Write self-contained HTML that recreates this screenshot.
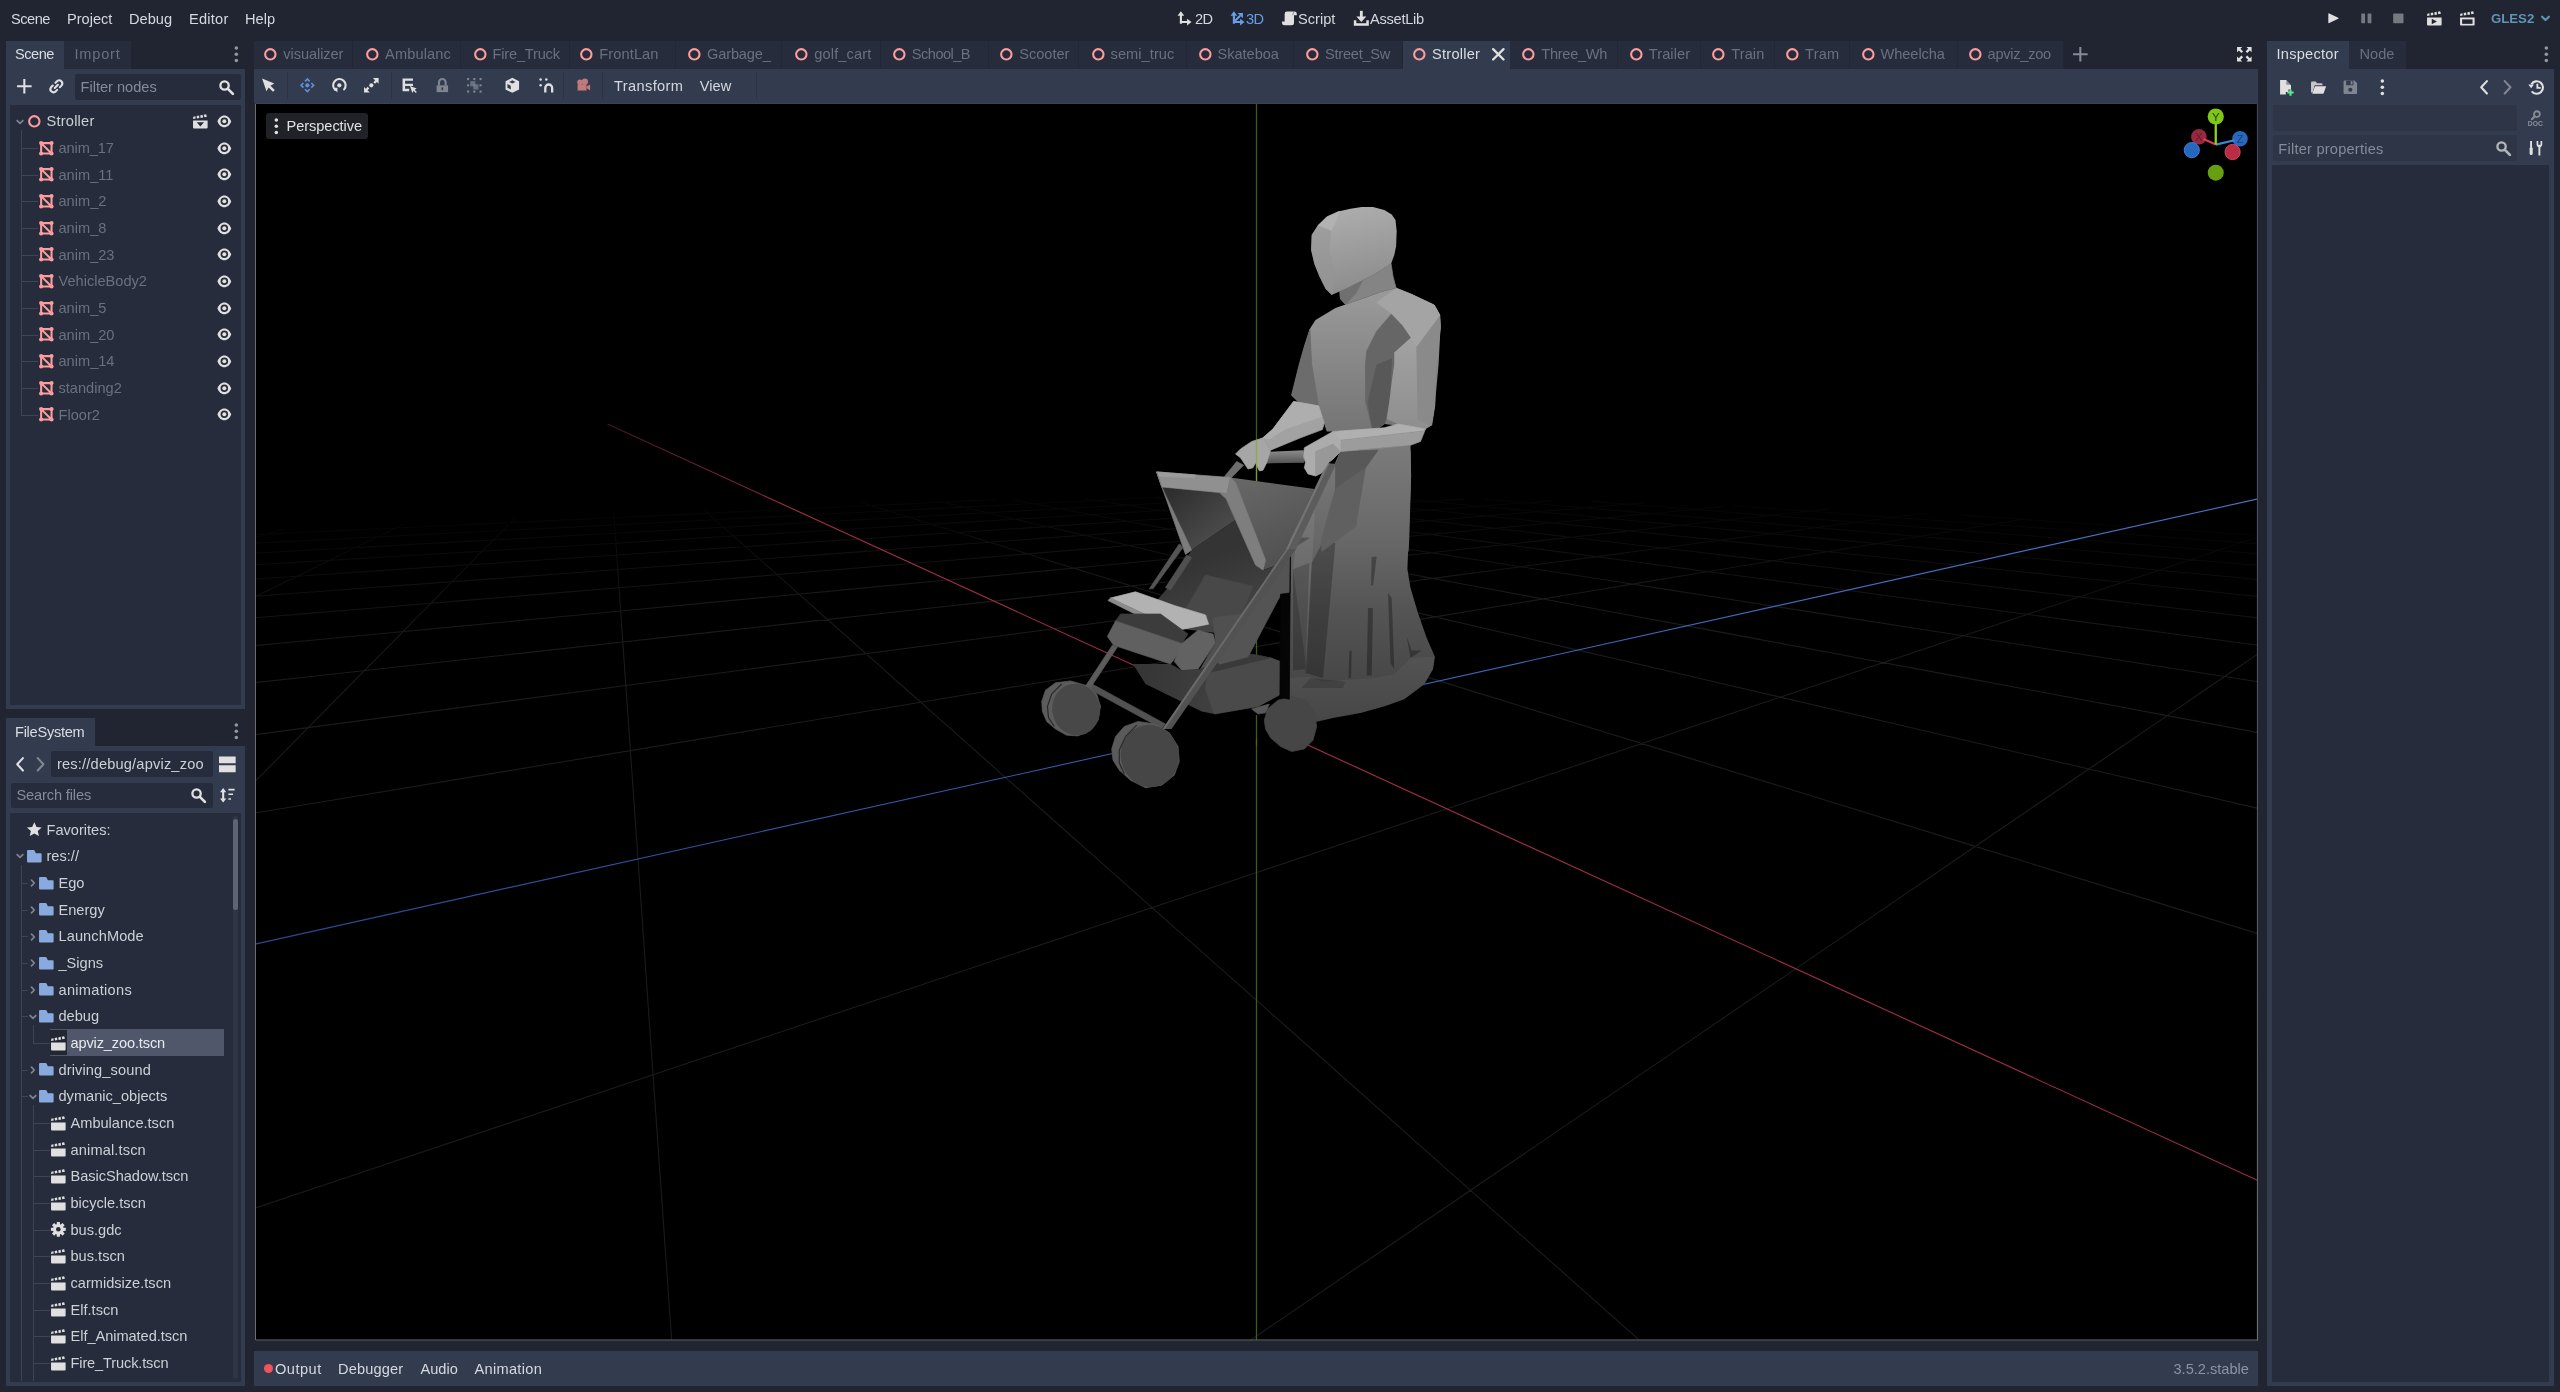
<!DOCTYPE html>
<html><head><meta charset="utf-8"><title>Godot Engine - Stroller</title>
<style>
html,body{margin:0;padding:0;background:#202531;}
body{width:2560px;height:1392px;position:relative;overflow:hidden;font-family:"Liberation Sans",sans-serif;}
body>div,body>span,body>svg{position:absolute;}
.t{white-space:nowrap;line-height:20px;height:20px;}
.i{overflow:visible;}
#w{position:absolute;left:0;top:0;width:2560px;height:1392px;will-change:transform;}
#w>div,#w>span,#w>svg{position:absolute;}
</style></head><body><div id="w">
<span class="t" style="left:11px;top:8.50px;color:#d5d8dd;font-size:14.6px;letter-spacing:-0.48px;">Scene</span>
<span class="t" style="left:67px;top:8.50px;color:#d5d8dd;font-size:14.6px;">Project</span>
<span class="t" style="left:129px;top:8.50px;color:#d5d8dd;font-size:14.6px;">Debug</span>
<span class="t" style="left:189px;top:8.50px;color:#d5d8dd;font-size:14.6px;letter-spacing:0.23px;">Editor</span>
<span class="t" style="left:245px;top:8.50px;color:#d5d8dd;font-size:14.6px;">Help</span>
<svg class="i" style="left:1176.16px;top:10.16px;width:16.67px;height:16.67px;" viewBox="0 0 16 16"><g transform="translate(1.3 1.2) scale(0.85)"><path d="M4 14V3M3 12.200H12.500" stroke="#e0e0e0" stroke-width="2.400" fill="none"/><path d="M4 0L7.800 5H.2zM16 12.200L11 8.400v7.600z" fill="#e0e0e0"/></g></svg>
<span class="t" style="left:1195px;top:8.50px;color:#d5d8dd;font-size:14.6px;letter-spacing:-0.68px;">2D</span>
<svg class="i" style="left:1229.16px;top:10.16px;width:16.67px;height:16.67px;" viewBox="0 0 16 16"><g transform="translate(1.3 1.2) scale(0.85)"><path d="M4 14V3M3 12.200H12.500M4.800 11.400L11 5.200" stroke="#699ce8" stroke-width="2.400" fill="none"/><path d="M4 0L7.800 5H.2zM16 12.200L11 8.400v7.600zM14.200 2v6L8.200 2z" fill="#699ce8"/></g></svg>
<span class="t" style="left:1246px;top:8.50px;color:#699ce8;font-size:14.6px;letter-spacing:-0.73px;">3D</span>
<svg class="i" style="left:1281.16px;top:10.16px;width:16.67px;height:16.67px;" viewBox="0 0 16 16"><path d="M5.800 1.500A2.300 2.300 0 0 0 3.500 3.800V11H1v1.300A2.400 2.400 0 0 0 3.400 14.700h6.700a2.400 2.400 0 0 0 2.400-2.400V5h2.700V3.800A2.300 2.300 0 0 0 12.900 1.500z" fill="#e0e0e0"/><path d="M12.800 2.200a1.400 1.400 0 0 0-1.300 1.500V5" fill="none" stroke="#202531" stroke-width=".7" opacity=".6"/></svg>
<span class="t" style="left:1298px;top:8.50px;color:#d5d8dd;font-size:14.6px;">Script</span>
<svg class="i" style="left:1352.66px;top:10.16px;width:16.67px;height:16.67px;" viewBox="0 0 16 16"><path d="M8 .8V8" stroke="#e0e0e0" stroke-width="2.700" fill="none"/><path d="M3.200 6.200h9.600L8 11.600z" fill="#e0e0e0"/><path d="M2 9.800V14H14V9.800" stroke="#e0e0e0" stroke-width="2.400" fill="none"/></svg>
<span class="t" style="left:1370px;top:8.50px;color:#d5d8dd;font-size:14.6px;letter-spacing:-0.26px;">AssetLib</span>
<svg class="i" style="left:2324.66px;top:10.16px;width:16.67px;height:16.67px;" viewBox="0 0 16 16"><path d="M3.200 3.900v8.200a.6.6 0 0 0 .9.500l8.600-4.100a.6.6 0 0 0 0-1l-8.600-4.100a.6.6 0 0 0-.9.500z" fill="#e0e0e0"/></svg>
<svg class="i" style="left:2357.66px;top:10.16px;width:16.67px;height:16.67px;opacity:0.45;" viewBox="0 0 16 16"><rect x="3.100" y="3.300" width="3.700" height="9.400" rx=".6" fill="#e0e0e0"/><rect x="9.200" y="3.300" width="3.700" height="9.400" rx=".6" fill="#e0e0e0"/></svg>
<svg class="i" style="left:2389.66px;top:10.16px;width:16.67px;height:16.67px;opacity:0.45;" viewBox="0 0 16 16"><rect x="3.050" y="3.300" width="9.900" height="9.400" rx=".8" fill="#e0e0e0"/></svg>
<svg class="i" style="left:2426.16px;top:10.16px;width:16.67px;height:16.67px;" viewBox="0 0 16 16"><path d="M1 7.200h14v6.800a1 1 0 0 1-1 1H2a1 1 0 0 1-1-1z" fill="#e0e0e0"/><path d="M1 5.800l.3-2.200 2-.4 .2 2.200zM4.700 5.300l-.2-2.300 2.200-.5 .4 2.400zM8.300 4.700l-.4-2.400 2.200-.500 .6 2.500zM11.900 4.100l-.600-2.500 2.300-.5 .700 2.600z" fill="#e0e0e0"/><path d="M5.500 8.400v5.400l5-2.700z" fill="#202531"/></svg>
<svg class="i" style="left:2458.66px;top:10.16px;width:16.67px;height:16.67px;" viewBox="0 0 16 16"><path d="M1 7.200h14v6.800a1 1 0 0 1-1 1H2a1 1 0 0 1-1-1z" fill="#e0e0e0"/><path d="M1 5.800l.3-2.200 2-.4 .2 2.200zM4.700 5.300l-.2-2.300 2.200-.5 .4 2.400zM8.300 4.700l-.4-2.400 2.200-.500 .6 2.500zM11.900 4.100l-.600-2.500 2.300-.5 .700 2.600z" fill="#e0e0e0"/><path d="M3 9h10v4.300H3z" fill="#202531"/></svg>
<span class="t" style="left:2491px;top:8.50px;color:#5e94b4;font-size:14.6px;font-weight:bold;font-size:13.2px;">GLES2</span>
<svg class="i" style="left:2536.50px;top:10.30px;width:17px;height:17px;" viewBox="0 0 16 16"><path d="M4.800 6.300l3.200 3.200 3.200-3.200" fill="none" stroke="#5e94b4" stroke-width="2" stroke-linecap="round" stroke-linejoin="round"/></svg>
<div style="left:6px;top:69px;width:238.5px;height:639.5px;background:#333b4f;"></div>
<div style="left:6px;top:41px;width:58px;height:28.5px;background:#333b4f;"></div>
<div style="left:64px;top:41px;width:67px;height:28px;background:#262c3b;"></div>
<span class="t" style="left:15px;top:44.00px;color:#dadde2;font-size:14.6px;letter-spacing:-0.48px;">Scene</span>
<span class="t" style="left:74.5px;top:44.00px;color:#6a7083;font-size:14.6px;letter-spacing:0.77px;">Import</span>
<svg class="i" style="left:228.16px;top:46.16px;width:16.67px;height:16.67px;" viewBox="0 0 16 16"><g fill="#9097a6"><circle cx="8" cy="2" r="1.7"/><circle cx="8" cy="8" r="1.7"/><circle cx="8" cy="14" r="1.7"/></g></svg>
<svg class="i" style="left:16.16px;top:78.16px;width:16.67px;height:16.67px;" viewBox="0 0 16 16"><path d="M7 1v6H1v2h6v6h2V9h6V7H9V1z" fill="#e0e0e0"/></svg>
<svg class="i" style="left:48.16px;top:78.16px;width:16.67px;height:16.67px;" viewBox="0 0 16 16"><g fill="none" stroke="#e0e0e0" stroke-width="2" stroke-linecap="round"><path d="M6.5 9.500l3-3"/><path d="M7.200 4.600l1.700-1.700a3 3 0 0 1 4.200 4.200l-1.700 1.700"/><path d="M8.800 11.400l-1.700 1.700a3 3 0 0 1-4.200-4.200l1.700-1.700"/></g></svg>
<div style="left:75px;top:73.5px;width:166px;height:26px;background:#262c3b;border-radius:2px;"></div>
<span class="t" style="left:80.5px;top:77.00px;color:#858b99;font-size:14.6px;">Filter nodes</span>
<svg class="i" style="left:217.66px;top:78.66px;width:16.67px;height:16.67px;" viewBox="0 0 16 16"><circle cx="6.300" cy="6.300" r="4" fill="none" stroke="#e0e0e0" stroke-width="2.200"/><path d="M9.500 9.500l4.800 4.800" stroke="#e0e0e0" stroke-width="2.600" stroke-linecap="round"/></svg>
<div style="left:10px;top:104.5px;width:231px;height:600px;background:#262c3b;"></div>
<svg class="i" style="left:13.40px;top:114.70px;width:14px;height:14px;" viewBox="0 0 16 16"><path d="M4.800 6.300l3.200 3.200 3.200-3.200" fill="none" stroke="#7d8393" stroke-width="2" stroke-linecap="round" stroke-linejoin="round"/></svg>
<svg class="i" style="left:26.16px;top:112.87px;width:16.67px;height:16.67px;" viewBox="0 0 16 16"><circle cx="8" cy="8" r="5" fill="none" stroke="#fc9c9c" stroke-width="2"/></svg>
<span class="t" style="left:46.5px;top:111.20px;color:#cdd0d6;font-size:14.6px;letter-spacing:0.22px;">Stroller</span>
<svg class="i" style="left:192.16px;top:112.87px;width:16.67px;height:16.67px;" viewBox="0 0 16 16"><path d="M1 7.200h14v6.800a1 1 0 0 1-1 1H2a1 1 0 0 1-1-1z" fill="#e0e0e0"/><path d="M1 5.800l.3-2.200 2-.4 .2 2.200zM4.700 5.300l-.2-2.300 2.200-.5 .4 2.400zM8.300 4.700l-.4-2.400 2.200-.500 .6 2.500zM11.900 4.100l-.600-2.500 2.300-.5 .700 2.600z" fill="#e0e0e0"/><path d="M4.500 9h7L8 13z" fill="#262c3b"/></svg>
<svg class="i" style="left:216.36px;top:112.87px;width:16.67px;height:16.67px;" viewBox="0 0 16 16"><path d="M8 2.300C4.900 2.300 2.600 4.700 1.500 7.600a1 1 0 0 0 0 .8C2.600 11.300 4.900 13.700 8 13.700s5.400-2.400 6.500-5.300a1 1 0 0 0 0-.8C13.400 4.700 11.100 2.300 8 2.300z" fill="#e0e0e0"/><circle cx="8" cy="8" r="3.6" fill="#262c3b"/><circle cx="8" cy="8" r="1.9" fill="#e0e0e0"/></svg>
<div style="left:21px;top:130.2px;width:1px;height:284.98px;background:#3d4458;"></div>
<div style="left:21px;top:147.88px;width:17px;height:1px;background:#3d4458;"></div>
<svg class="i" style="left:38.37px;top:139.54px;width:16.67px;height:16.67px;" viewBox="0 0 16 16"><path d="M3 3h10v10H3zM3 3l10 10" fill="none" stroke="#fc9c9c" stroke-width="2"/><g fill="#fc9c9c"><circle cx="3" cy="3" r="2"/><circle cx="13" cy="3" r="2"/><circle cx="3" cy="13" r="2"/><circle cx="13" cy="13" r="2"/></g></svg>
<span class="t" style="left:58.5px;top:137.88px;color:#6a7083;font-size:14.6px;letter-spacing:-0.1px;">anim_17</span>
<svg class="i" style="left:216.36px;top:139.54px;width:16.67px;height:16.67px;" viewBox="0 0 16 16"><path d="M8 2.300C4.900 2.300 2.600 4.700 1.500 7.600a1 1 0 0 0 0 .8C2.600 11.300 4.900 13.700 8 13.700s5.400-2.400 6.500-5.300a1 1 0 0 0 0-.8C13.400 4.700 11.100 2.300 8 2.300z" fill="#e0e0e0"/><circle cx="8" cy="8" r="3.6" fill="#262c3b"/><circle cx="8" cy="8" r="1.9" fill="#e0e0e0"/></svg>
<div style="left:21px;top:174.56px;width:17px;height:1px;background:#3d4458;"></div>
<svg class="i" style="left:38.37px;top:166.22px;width:16.67px;height:16.67px;" viewBox="0 0 16 16"><path d="M3 3h10v10H3zM3 3l10 10" fill="none" stroke="#fc9c9c" stroke-width="2"/><g fill="#fc9c9c"><circle cx="3" cy="3" r="2"/><circle cx="13" cy="3" r="2"/><circle cx="3" cy="13" r="2"/><circle cx="13" cy="13" r="2"/></g></svg>
<span class="t" style="left:58.5px;top:164.56px;color:#6a7083;font-size:14.6px;">anim_11</span>
<svg class="i" style="left:216.36px;top:166.22px;width:16.67px;height:16.67px;" viewBox="0 0 16 16"><path d="M8 2.300C4.900 2.300 2.600 4.700 1.500 7.600a1 1 0 0 0 0 .8C2.600 11.300 4.900 13.700 8 13.700s5.400-2.400 6.500-5.300a1 1 0 0 0 0-.8C13.400 4.700 11.100 2.300 8 2.300z" fill="#e0e0e0"/><circle cx="8" cy="8" r="3.6" fill="#262c3b"/><circle cx="8" cy="8" r="1.9" fill="#e0e0e0"/></svg>
<div style="left:21px;top:201.24px;width:17px;height:1px;background:#3d4458;"></div>
<svg class="i" style="left:38.37px;top:192.91px;width:16.67px;height:16.67px;" viewBox="0 0 16 16"><path d="M3 3h10v10H3zM3 3l10 10" fill="none" stroke="#fc9c9c" stroke-width="2"/><g fill="#fc9c9c"><circle cx="3" cy="3" r="2"/><circle cx="13" cy="3" r="2"/><circle cx="3" cy="13" r="2"/><circle cx="13" cy="13" r="2"/></g></svg>
<span class="t" style="left:58.5px;top:191.24px;color:#6a7083;font-size:14.6px;">anim_2</span>
<svg class="i" style="left:216.36px;top:192.91px;width:16.67px;height:16.67px;" viewBox="0 0 16 16"><path d="M8 2.300C4.900 2.300 2.600 4.700 1.500 7.600a1 1 0 0 0 0 .8C2.600 11.300 4.900 13.700 8 13.700s5.400-2.400 6.500-5.300a1 1 0 0 0 0-.8C13.400 4.700 11.100 2.300 8 2.300z" fill="#e0e0e0"/><circle cx="8" cy="8" r="3.6" fill="#262c3b"/><circle cx="8" cy="8" r="1.9" fill="#e0e0e0"/></svg>
<div style="left:21px;top:227.92000000000002px;width:17px;height:1px;background:#3d4458;"></div>
<svg class="i" style="left:38.37px;top:219.59px;width:16.67px;height:16.67px;" viewBox="0 0 16 16"><path d="M3 3h10v10H3zM3 3l10 10" fill="none" stroke="#fc9c9c" stroke-width="2"/><g fill="#fc9c9c"><circle cx="3" cy="3" r="2"/><circle cx="13" cy="3" r="2"/><circle cx="3" cy="13" r="2"/><circle cx="13" cy="13" r="2"/></g></svg>
<span class="t" style="left:58.5px;top:217.92px;color:#6a7083;font-size:14.6px;">anim_8</span>
<svg class="i" style="left:216.36px;top:219.59px;width:16.67px;height:16.67px;" viewBox="0 0 16 16"><path d="M8 2.300C4.900 2.300 2.600 4.700 1.500 7.600a1 1 0 0 0 0 .8C2.600 11.300 4.900 13.700 8 13.700s5.400-2.400 6.500-5.300a1 1 0 0 0 0-.8C13.400 4.700 11.100 2.300 8 2.300z" fill="#e0e0e0"/><circle cx="8" cy="8" r="3.6" fill="#262c3b"/><circle cx="8" cy="8" r="1.9" fill="#e0e0e0"/></svg>
<div style="left:21px;top:254.60000000000002px;width:17px;height:1px;background:#3d4458;"></div>
<svg class="i" style="left:38.37px;top:246.27px;width:16.67px;height:16.67px;" viewBox="0 0 16 16"><path d="M3 3h10v10H3zM3 3l10 10" fill="none" stroke="#fc9c9c" stroke-width="2"/><g fill="#fc9c9c"><circle cx="3" cy="3" r="2"/><circle cx="13" cy="3" r="2"/><circle cx="3" cy="13" r="2"/><circle cx="13" cy="13" r="2"/></g></svg>
<span class="t" style="left:58.5px;top:244.60px;color:#6a7083;font-size:14.6px;">anim_23</span>
<svg class="i" style="left:216.36px;top:246.27px;width:16.67px;height:16.67px;" viewBox="0 0 16 16"><path d="M8 2.300C4.900 2.300 2.600 4.700 1.500 7.600a1 1 0 0 0 0 .8C2.600 11.300 4.900 13.700 8 13.700s5.400-2.400 6.500-5.300a1 1 0 0 0 0-.8C13.400 4.700 11.100 2.300 8 2.300z" fill="#e0e0e0"/><circle cx="8" cy="8" r="3.6" fill="#262c3b"/><circle cx="8" cy="8" r="1.9" fill="#e0e0e0"/></svg>
<div style="left:21px;top:281.28px;width:17px;height:1px;background:#3d4458;"></div>
<svg class="i" style="left:38.37px;top:272.94px;width:16.67px;height:16.67px;" viewBox="0 0 16 16"><path d="M3 3h10v10H3zM3 3l10 10" fill="none" stroke="#fc9c9c" stroke-width="2"/><g fill="#fc9c9c"><circle cx="3" cy="3" r="2"/><circle cx="13" cy="3" r="2"/><circle cx="3" cy="13" r="2"/><circle cx="13" cy="13" r="2"/></g></svg>
<span class="t" style="left:58.5px;top:271.28px;color:#6a7083;font-size:14.6px;">VehicleBody2</span>
<svg class="i" style="left:216.36px;top:272.94px;width:16.67px;height:16.67px;" viewBox="0 0 16 16"><path d="M8 2.300C4.900 2.300 2.600 4.700 1.500 7.600a1 1 0 0 0 0 .8C2.600 11.300 4.900 13.700 8 13.700s5.400-2.400 6.500-5.300a1 1 0 0 0 0-.8C13.400 4.700 11.100 2.300 8 2.300z" fill="#e0e0e0"/><circle cx="8" cy="8" r="3.6" fill="#262c3b"/><circle cx="8" cy="8" r="1.9" fill="#e0e0e0"/></svg>
<div style="left:21px;top:307.96px;width:17px;height:1px;background:#3d4458;"></div>
<svg class="i" style="left:38.37px;top:299.62px;width:16.67px;height:16.67px;" viewBox="0 0 16 16"><path d="M3 3h10v10H3zM3 3l10 10" fill="none" stroke="#fc9c9c" stroke-width="2"/><g fill="#fc9c9c"><circle cx="3" cy="3" r="2"/><circle cx="13" cy="3" r="2"/><circle cx="3" cy="13" r="2"/><circle cx="13" cy="13" r="2"/></g></svg>
<span class="t" style="left:58.5px;top:297.96px;color:#6a7083;font-size:14.6px;">anim_5</span>
<svg class="i" style="left:216.36px;top:299.62px;width:16.67px;height:16.67px;" viewBox="0 0 16 16"><path d="M8 2.300C4.900 2.300 2.600 4.700 1.500 7.600a1 1 0 0 0 0 .8C2.600 11.300 4.900 13.700 8 13.700s5.400-2.400 6.500-5.300a1 1 0 0 0 0-.8C13.400 4.700 11.100 2.300 8 2.300z" fill="#e0e0e0"/><circle cx="8" cy="8" r="3.6" fill="#262c3b"/><circle cx="8" cy="8" r="1.9" fill="#e0e0e0"/></svg>
<div style="left:21px;top:334.64px;width:17px;height:1px;background:#3d4458;"></div>
<svg class="i" style="left:38.37px;top:326.31px;width:16.67px;height:16.67px;" viewBox="0 0 16 16"><path d="M3 3h10v10H3zM3 3l10 10" fill="none" stroke="#fc9c9c" stroke-width="2"/><g fill="#fc9c9c"><circle cx="3" cy="3" r="2"/><circle cx="13" cy="3" r="2"/><circle cx="3" cy="13" r="2"/><circle cx="13" cy="13" r="2"/></g></svg>
<span class="t" style="left:58.5px;top:324.64px;color:#6a7083;font-size:14.6px;">anim_20</span>
<svg class="i" style="left:216.36px;top:326.31px;width:16.67px;height:16.67px;" viewBox="0 0 16 16"><path d="M8 2.300C4.900 2.300 2.600 4.700 1.500 7.600a1 1 0 0 0 0 .8C2.600 11.300 4.900 13.700 8 13.700s5.400-2.400 6.500-5.300a1 1 0 0 0 0-.8C13.400 4.700 11.100 2.300 8 2.300z" fill="#e0e0e0"/><circle cx="8" cy="8" r="3.6" fill="#262c3b"/><circle cx="8" cy="8" r="1.9" fill="#e0e0e0"/></svg>
<div style="left:21px;top:361.32px;width:17px;height:1px;background:#3d4458;"></div>
<svg class="i" style="left:38.37px;top:352.99px;width:16.67px;height:16.67px;" viewBox="0 0 16 16"><path d="M3 3h10v10H3zM3 3l10 10" fill="none" stroke="#fc9c9c" stroke-width="2"/><g fill="#fc9c9c"><circle cx="3" cy="3" r="2"/><circle cx="13" cy="3" r="2"/><circle cx="3" cy="13" r="2"/><circle cx="13" cy="13" r="2"/></g></svg>
<span class="t" style="left:58.5px;top:351.32px;color:#6a7083;font-size:14.6px;">anim_14</span>
<svg class="i" style="left:216.36px;top:352.99px;width:16.67px;height:16.67px;" viewBox="0 0 16 16"><path d="M8 2.300C4.900 2.300 2.600 4.700 1.500 7.600a1 1 0 0 0 0 .8C2.600 11.300 4.900 13.700 8 13.700s5.400-2.400 6.500-5.300a1 1 0 0 0 0-.8C13.400 4.700 11.100 2.300 8 2.300z" fill="#e0e0e0"/><circle cx="8" cy="8" r="3.6" fill="#262c3b"/><circle cx="8" cy="8" r="1.9" fill="#e0e0e0"/></svg>
<div style="left:21px;top:388.0px;width:17px;height:1px;background:#3d4458;"></div>
<svg class="i" style="left:38.37px;top:379.67px;width:16.67px;height:16.67px;" viewBox="0 0 16 16"><path d="M3 3h10v10H3zM3 3l10 10" fill="none" stroke="#fc9c9c" stroke-width="2"/><g fill="#fc9c9c"><circle cx="3" cy="3" r="2"/><circle cx="13" cy="3" r="2"/><circle cx="3" cy="13" r="2"/><circle cx="13" cy="13" r="2"/></g></svg>
<span class="t" style="left:58.5px;top:378.00px;color:#6a7083;font-size:14.6px;">standing2</span>
<svg class="i" style="left:216.36px;top:379.67px;width:16.67px;height:16.67px;" viewBox="0 0 16 16"><path d="M8 2.300C4.900 2.300 2.600 4.700 1.500 7.600a1 1 0 0 0 0 .8C2.600 11.300 4.900 13.700 8 13.700s5.400-2.400 6.500-5.300a1 1 0 0 0 0-.8C13.400 4.700 11.100 2.300 8 2.300z" fill="#e0e0e0"/><circle cx="8" cy="8" r="3.6" fill="#262c3b"/><circle cx="8" cy="8" r="1.9" fill="#e0e0e0"/></svg>
<div style="left:21px;top:414.68px;width:17px;height:1px;background:#3d4458;"></div>
<svg class="i" style="left:38.37px;top:406.35px;width:16.67px;height:16.67px;" viewBox="0 0 16 16"><path d="M3 3h10v10H3zM3 3l10 10" fill="none" stroke="#fc9c9c" stroke-width="2"/><g fill="#fc9c9c"><circle cx="3" cy="3" r="2"/><circle cx="13" cy="3" r="2"/><circle cx="3" cy="13" r="2"/><circle cx="13" cy="13" r="2"/></g></svg>
<span class="t" style="left:58.5px;top:404.68px;color:#6a7083;font-size:14.6px;">Floor2</span>
<svg class="i" style="left:216.36px;top:406.35px;width:16.67px;height:16.67px;" viewBox="0 0 16 16"><path d="M8 2.300C4.900 2.300 2.600 4.700 1.500 7.600a1 1 0 0 0 0 .8C2.600 11.300 4.900 13.700 8 13.700s5.400-2.400 6.500-5.300a1 1 0 0 0 0-.8C13.400 4.700 11.100 2.300 8 2.300z" fill="#e0e0e0"/><circle cx="8" cy="8" r="3.6" fill="#262c3b"/><circle cx="8" cy="8" r="1.9" fill="#e0e0e0"/></svg>
<div style="left:6px;top:745.5px;width:238.5px;height:640.5px;background:#333b4f;"></div>
<div style="left:6px;top:718px;width:89px;height:28px;background:#333b4f;"></div>
<span class="t" style="left:15px;top:721.50px;color:#dadde2;font-size:14.6px;letter-spacing:-0.27px;">FileSystem</span>
<svg class="i" style="left:228.16px;top:723.16px;width:16.67px;height:16.67px;" viewBox="0 0 16 16"><g fill="#9097a6"><circle cx="8" cy="2" r="1.7"/><circle cx="8" cy="8" r="1.7"/><circle cx="8" cy="14" r="1.7"/></g></svg>
<svg class="i" style="left:12.16px;top:755.66px;width:16.67px;height:16.67px;" viewBox="0 0 16 16"><path d="M10.500 2L5 8l5.500 6" fill="none" stroke="#e0e0e0" stroke-width="2" stroke-linecap="round" stroke-linejoin="round"/></svg>
<svg class="i" style="left:32.16px;top:755.66px;width:16.67px;height:16.67px;opacity:0.45;" viewBox="0 0 16 16"><path d="M5.500 2L11 8l-5.500 6" fill="none" stroke="#e0e0e0" stroke-width="2" stroke-linecap="round" stroke-linejoin="round"/></svg>
<div style="left:50.5px;top:751px;width:162px;height:25.5px;background:#262c3b;border-radius:2px;"></div>
<span class="t" style="left:57px;top:754.00px;color:#cdd0d6;font-size:14.6px;letter-spacing:0.19px;">res://debug/apviz_zoo</span>
<svg class="i" style="left:218.66px;top:755.66px;width:16.67px;height:16.67px;" viewBox="0 0 16 16"><path d="M0 .5h16v6.500H0zM0 9h16v6.500H0z" fill="#e0e0e0"/></svg>
<div style="left:10.5px;top:782.5px;width:202px;height:25.5px;background:#262c3b;border-radius:2px;"></div>
<span class="t" style="left:16.5px;top:785.00px;color:#858b99;font-size:14.6px;letter-spacing:-0.14px;">Search files</span>
<svg class="i" style="left:189.66px;top:786.66px;width:16.67px;height:16.67px;" viewBox="0 0 16 16"><circle cx="6.300" cy="6.300" r="4" fill="none" stroke="#e0e0e0" stroke-width="2.200"/><path d="M9.500 9.500l4.800 4.800" stroke="#e0e0e0" stroke-width="2.600" stroke-linecap="round"/></svg>
<svg class="i" style="left:218.66px;top:786.66px;width:16.67px;height:16.67px;" viewBox="0 0 16 16"><path d="M4 1L1 5h2v6H1l3 4 3-4H5V5h2z" fill="#e0e0e0"/><path d="M9 2.500h6M9 7h4.500M9 11.500h2.500" stroke="#e0e0e0" stroke-width="1.600"/></svg>
<div style="left:10px;top:813px;width:231px;height:568.5px;background:#262c3b;"></div>
<div style="left:232.5px;top:816px;width:5px;height:563px;background:#2f3547;border-radius:2.5px;"></div>
<div style="left:232.5px;top:819px;width:5px;height:91px;background:#5d6475;border-radius:2.5px;"></div>
<svg class="i" style="left:26.16px;top:821.16px;width:16.67px;height:16.67px;" viewBox="0 0 16 16"><path d="M8 1.200l2.100 4.600 5 .5-3.800 3.300 1.100 4.900L8 12l-4.400 2.500 1.100-4.900L.9 6.300l5-.5z" fill="#e0e0e0"/></svg>
<span class="t" style="left:46.5px;top:819.50px;color:#cdd0d6;font-size:14.6px;">Favorites:</span>
<svg class="i" style="left:13.40px;top:849.48px;width:14px;height:14px;" viewBox="0 0 16 16"><path d="M4.800 6.300l3.200 3.200 3.200-3.200" fill="none" stroke="#7d8393" stroke-width="2" stroke-linecap="round" stroke-linejoin="round"/></svg>
<svg class="i" style="left:26.16px;top:847.84px;width:16.67px;height:16.67px;" viewBox="0 0 16 16"><path d="M2 2a1 1 0 0 0-1 1v10a1 1 0 0 0 1 1h12a1 1 0 0 0 1-1V6a1 1 0 0 0-1-1H9.500L8.300 2.600A1 1 0 0 0 7.400 2z" fill="#88aadf"/></svg>
<span class="t" style="left:46.5px;top:846.18px;color:#cdd0d6;font-size:14.6px;">res://</span>
<div style="left:21px;top:865.18px;width:1px;height:516.32px;background:#3d4458;"></div>
<div style="left:21px;top:882.86px;width:7px;height:1px;background:#3d4458;"></div>
<svg class="i" style="left:25.50px;top:876.16px;width:14px;height:14px;" viewBox="0 0 16 16"><path d="M6.300 4.800l3.200 3.200-3.200 3.200" fill="none" stroke="#7d8393" stroke-width="2" stroke-linecap="round" stroke-linejoin="round"/></svg>
<svg class="i" style="left:38.37px;top:874.52px;width:16.67px;height:16.67px;" viewBox="0 0 16 16"><path d="M2 2a1 1 0 0 0-1 1v10a1 1 0 0 0 1 1h12a1 1 0 0 0 1-1V6a1 1 0 0 0-1-1H9.500L8.300 2.600A1 1 0 0 0 7.400 2z" fill="#88aadf"/></svg>
<span class="t" style="left:58.5px;top:872.86px;color:#cdd0d6;font-size:14.6px;">Ego</span>
<div style="left:21px;top:909.54px;width:7px;height:1px;background:#3d4458;"></div>
<svg class="i" style="left:25.50px;top:902.84px;width:14px;height:14px;" viewBox="0 0 16 16"><path d="M6.300 4.800l3.200 3.200-3.200 3.200" fill="none" stroke="#7d8393" stroke-width="2" stroke-linecap="round" stroke-linejoin="round"/></svg>
<svg class="i" style="left:38.37px;top:901.20px;width:16.67px;height:16.67px;" viewBox="0 0 16 16"><path d="M2 2a1 1 0 0 0-1 1v10a1 1 0 0 0 1 1h12a1 1 0 0 0 1-1V6a1 1 0 0 0-1-1H9.500L8.300 2.600A1 1 0 0 0 7.400 2z" fill="#88aadf"/></svg>
<span class="t" style="left:58.5px;top:899.54px;color:#cdd0d6;font-size:14.6px;">Energy</span>
<div style="left:21px;top:936.22px;width:7px;height:1px;background:#3d4458;"></div>
<svg class="i" style="left:25.50px;top:929.52px;width:14px;height:14px;" viewBox="0 0 16 16"><path d="M6.300 4.800l3.200 3.200-3.200 3.200" fill="none" stroke="#7d8393" stroke-width="2" stroke-linecap="round" stroke-linejoin="round"/></svg>
<svg class="i" style="left:38.37px;top:927.88px;width:16.67px;height:16.67px;" viewBox="0 0 16 16"><path d="M2 2a1 1 0 0 0-1 1v10a1 1 0 0 0 1 1h12a1 1 0 0 0 1-1V6a1 1 0 0 0-1-1H9.500L8.300 2.600A1 1 0 0 0 7.400 2z" fill="#88aadf"/></svg>
<span class="t" style="left:58.5px;top:926.22px;color:#cdd0d6;font-size:14.6px;letter-spacing:0.09px;">LaunchMode</span>
<div style="left:21px;top:962.9px;width:7px;height:1px;background:#3d4458;"></div>
<svg class="i" style="left:25.50px;top:956.20px;width:14px;height:14px;" viewBox="0 0 16 16"><path d="M6.300 4.800l3.200 3.200-3.200 3.200" fill="none" stroke="#7d8393" stroke-width="2" stroke-linecap="round" stroke-linejoin="round"/></svg>
<svg class="i" style="left:38.37px;top:954.56px;width:16.67px;height:16.67px;" viewBox="0 0 16 16"><path d="M2 2a1 1 0 0 0-1 1v10a1 1 0 0 0 1 1h12a1 1 0 0 0 1-1V6a1 1 0 0 0-1-1H9.500L8.300 2.600A1 1 0 0 0 7.400 2z" fill="#88aadf"/></svg>
<span class="t" style="left:58.5px;top:952.90px;color:#cdd0d6;font-size:14.6px;">_Signs</span>
<div style="left:21px;top:989.5799999999999px;width:7px;height:1px;background:#3d4458;"></div>
<svg class="i" style="left:25.50px;top:982.88px;width:14px;height:14px;" viewBox="0 0 16 16"><path d="M6.300 4.800l3.200 3.200-3.200 3.200" fill="none" stroke="#7d8393" stroke-width="2" stroke-linecap="round" stroke-linejoin="round"/></svg>
<svg class="i" style="left:38.37px;top:981.24px;width:16.67px;height:16.67px;" viewBox="0 0 16 16"><path d="M2 2a1 1 0 0 0-1 1v10a1 1 0 0 0 1 1h12a1 1 0 0 0 1-1V6a1 1 0 0 0-1-1H9.500L8.300 2.600A1 1 0 0 0 7.400 2z" fill="#88aadf"/></svg>
<span class="t" style="left:58.5px;top:979.58px;color:#cdd0d6;font-size:14.6px;letter-spacing:0.29px;">animations</span>
<div style="left:21px;top:1016.26px;width:7px;height:1px;background:#3d4458;"></div>
<svg class="i" style="left:25.50px;top:1009.56px;width:14px;height:14px;" viewBox="0 0 16 16"><path d="M4.800 6.300l3.200 3.200 3.200-3.200" fill="none" stroke="#7d8393" stroke-width="2" stroke-linecap="round" stroke-linejoin="round"/></svg>
<svg class="i" style="left:38.37px;top:1007.92px;width:16.67px;height:16.67px;" viewBox="0 0 16 16"><path d="M2 2a1 1 0 0 0-1 1v10a1 1 0 0 0 1 1h12a1 1 0 0 0 1-1V6a1 1 0 0 0-1-1H9.500L8.300 2.600A1 1 0 0 0 7.400 2z" fill="#88aadf"/></svg>
<span class="t" style="left:58.5px;top:1006.26px;color:#cdd0d6;font-size:14.6px;">debug</span>
<div style="left:33px;top:1025.26px;width:1px;height:17.680000000000064px;background:#3d4458;"></div>
<div style="left:33px;top:1042.94px;width:17px;height:1px;background:#3d4458;"></div>
<div style="left:50.3px;top:1029px;width:174.2px;height:27px;background:#50576a;"></div>
<div style="left:50.3px;top:1030px;width:16.5px;height:25px;background:#222733;"></div>
<svg class="i" style="left:50.37px;top:1034.61px;width:16.67px;height:16.67px;" viewBox="0 0 16 16"><path d="M1 7.200h14v6.800a1 1 0 0 1-1 1H2a1 1 0 0 1-1-1z" fill="#e0e0e0"/><path d="M1 5.800l.3-2.200 2-.4 .2 2.200zM4.700 5.300l-.2-2.300 2.200-.5 .4 2.400zM8.300 4.700l-.4-2.400 2.200-.500 .6 2.500zM11.900 4.100l-.600-2.500 2.300-.5 .700 2.600z" fill="#e0e0e0"/></svg>
<span class="t" style="left:70.5px;top:1032.94px;color:#e8eaee;font-size:14.6px;letter-spacing:-0.14px;">apviz_zoo.tscn</span>
<div style="left:21px;top:1069.62px;width:7px;height:1px;background:#3d4458;"></div>
<svg class="i" style="left:25.50px;top:1062.92px;width:14px;height:14px;" viewBox="0 0 16 16"><path d="M6.300 4.800l3.200 3.200-3.200 3.200" fill="none" stroke="#7d8393" stroke-width="2" stroke-linecap="round" stroke-linejoin="round"/></svg>
<svg class="i" style="left:38.37px;top:1061.28px;width:16.67px;height:16.67px;" viewBox="0 0 16 16"><path d="M2 2a1 1 0 0 0-1 1v10a1 1 0 0 0 1 1h12a1 1 0 0 0 1-1V6a1 1 0 0 0-1-1H9.500L8.300 2.600A1 1 0 0 0 7.400 2z" fill="#88aadf"/></svg>
<span class="t" style="left:58.5px;top:1059.62px;color:#cdd0d6;font-size:14.6px;letter-spacing:0.12px;">driving_sound</span>
<div style="left:21px;top:1096.3px;width:7px;height:1px;background:#3d4458;"></div>
<svg class="i" style="left:25.50px;top:1089.60px;width:14px;height:14px;" viewBox="0 0 16 16"><path d="M4.800 6.300l3.200 3.200 3.200-3.200" fill="none" stroke="#7d8393" stroke-width="2" stroke-linecap="round" stroke-linejoin="round"/></svg>
<svg class="i" style="left:38.37px;top:1087.96px;width:16.67px;height:16.67px;" viewBox="0 0 16 16"><path d="M2 2a1 1 0 0 0-1 1v10a1 1 0 0 0 1 1h12a1 1 0 0 0 1-1V6a1 1 0 0 0-1-1H9.500L8.300 2.600A1 1 0 0 0 7.400 2z" fill="#88aadf"/></svg>
<span class="t" style="left:58.5px;top:1086.30px;color:#cdd0d6;font-size:14.6px;">dymanic_objects</span>
<div style="left:33px;top:1105.3px;width:1px;height:276.20000000000005px;background:#3d4458;"></div>
<div style="left:33px;top:1122.98px;width:17px;height:1px;background:#3d4458;"></div>
<svg class="i" style="left:50.37px;top:1114.64px;width:16.67px;height:16.67px;" viewBox="0 0 16 16"><path d="M1 7.200h14v6.800a1 1 0 0 1-1 1H2a1 1 0 0 1-1-1z" fill="#e0e0e0"/><path d="M1 5.800l.3-2.200 2-.4 .2 2.200zM4.700 5.300l-.2-2.300 2.200-.5 .4 2.400zM8.300 4.700l-.4-2.400 2.200-.500 .6 2.500zM11.900 4.100l-.600-2.500 2.300-.5 .700 2.600z" fill="#e0e0e0"/></svg>
<span class="t" style="left:70.5px;top:1112.98px;color:#cdd0d6;font-size:14.6px;">Ambulance.tscn</span>
<div style="left:33px;top:1149.6599999999999px;width:17px;height:1px;background:#3d4458;"></div>
<svg class="i" style="left:50.37px;top:1141.32px;width:16.67px;height:16.67px;" viewBox="0 0 16 16"><path d="M1 7.200h14v6.800a1 1 0 0 1-1 1H2a1 1 0 0 1-1-1z" fill="#e0e0e0"/><path d="M1 5.800l.3-2.200 2-.4 .2 2.200zM4.700 5.300l-.2-2.300 2.200-.5 .4 2.400zM8.300 4.700l-.4-2.400 2.200-.500 .6 2.500zM11.900 4.100l-.600-2.500 2.300-.5 .700 2.600z" fill="#e0e0e0"/></svg>
<span class="t" style="left:70.5px;top:1139.66px;color:#cdd0d6;font-size:14.6px;letter-spacing:0.14px;">animal.tscn</span>
<div style="left:33px;top:1176.34px;width:17px;height:1px;background:#3d4458;"></div>
<svg class="i" style="left:50.37px;top:1168.00px;width:16.67px;height:16.67px;" viewBox="0 0 16 16"><path d="M1 7.200h14v6.800a1 1 0 0 1-1 1H2a1 1 0 0 1-1-1z" fill="#e0e0e0"/><path d="M1 5.800l.3-2.200 2-.4 .2 2.200zM4.700 5.300l-.2-2.300 2.200-.5 .4 2.400zM8.300 4.700l-.4-2.400 2.200-.500 .6 2.500zM11.900 4.100l-.600-2.500 2.300-.5 .700 2.600z" fill="#e0e0e0"/></svg>
<span class="t" style="left:70.5px;top:1166.34px;color:#cdd0d6;font-size:14.6px;letter-spacing:-0.04px;">BasicShadow.tscn</span>
<div style="left:33px;top:1203.02px;width:17px;height:1px;background:#3d4458;"></div>
<svg class="i" style="left:50.37px;top:1194.68px;width:16.67px;height:16.67px;" viewBox="0 0 16 16"><path d="M1 7.200h14v6.800a1 1 0 0 1-1 1H2a1 1 0 0 1-1-1z" fill="#e0e0e0"/><path d="M1 5.800l.3-2.200 2-.4 .2 2.200zM4.700 5.300l-.2-2.300 2.200-.5 .4 2.400zM8.300 4.700l-.4-2.400 2.200-.500 .6 2.500zM11.900 4.100l-.600-2.500 2.300-.5 .700 2.600z" fill="#e0e0e0"/></svg>
<span class="t" style="left:70.5px;top:1193.02px;color:#cdd0d6;font-size:14.6px;">bicycle.tscn</span>
<div style="left:33px;top:1229.7px;width:17px;height:1px;background:#3d4458;"></div>
<svg class="i" style="left:50.37px;top:1221.37px;width:16.67px;height:16.67px;" viewBox="0 0 16 16"><path d="M12.97 6.46L15.15 6.55L15.15 9.45L12.97 9.54L12.60 10.43L14.08 12.03L12.03 14.08L10.43 12.60L9.54 12.97L9.45 15.15L6.55 15.15L6.46 12.97L5.57 12.60L3.97 14.08L1.92 12.03L3.40 10.43L3.03 9.54L0.85 9.45L0.85 6.55L3.03 6.46L3.40 5.57L1.92 3.97L3.97 1.92L5.57 3.40L6.46 3.03L6.55 0.85L9.45 0.85L9.54 3.03L10.43 3.40L12.03 1.92L14.08 3.97L12.60 5.57z" fill="#e0e0e0"/><circle cx="8" cy="8" r="2.200" fill="#262c3b"/></svg>
<span class="t" style="left:70.5px;top:1219.70px;color:#cdd0d6;font-size:14.6px;">bus.gdc</span>
<div style="left:33px;top:1256.38px;width:17px;height:1px;background:#3d4458;"></div>
<svg class="i" style="left:50.37px;top:1248.05px;width:16.67px;height:16.67px;" viewBox="0 0 16 16"><path d="M1 7.200h14v6.800a1 1 0 0 1-1 1H2a1 1 0 0 1-1-1z" fill="#e0e0e0"/><path d="M1 5.800l.3-2.200 2-.4 .2 2.200zM4.700 5.300l-.2-2.300 2.200-.5 .4 2.400zM8.300 4.700l-.4-2.400 2.200-.500 .6 2.500zM11.900 4.100l-.600-2.500 2.300-.5 .700 2.600z" fill="#e0e0e0"/></svg>
<span class="t" style="left:70.5px;top:1246.38px;color:#cdd0d6;font-size:14.6px;">bus.tscn</span>
<div style="left:33px;top:1283.06px;width:17px;height:1px;background:#3d4458;"></div>
<svg class="i" style="left:50.37px;top:1274.72px;width:16.67px;height:16.67px;" viewBox="0 0 16 16"><path d="M1 7.200h14v6.800a1 1 0 0 1-1 1H2a1 1 0 0 1-1-1z" fill="#e0e0e0"/><path d="M1 5.800l.3-2.200 2-.4 .2 2.200zM4.700 5.300l-.2-2.300 2.200-.5 .4 2.400zM8.300 4.700l-.4-2.400 2.200-.500 .6 2.500zM11.900 4.100l-.600-2.500 2.300-.5 .700 2.600z" fill="#e0e0e0"/></svg>
<span class="t" style="left:70.5px;top:1273.06px;color:#cdd0d6;font-size:14.6px;">carmidsize.tscn</span>
<div style="left:33px;top:1309.74px;width:17px;height:1px;background:#3d4458;"></div>
<svg class="i" style="left:50.37px;top:1301.40px;width:16.67px;height:16.67px;" viewBox="0 0 16 16"><path d="M1 7.200h14v6.800a1 1 0 0 1-1 1H2a1 1 0 0 1-1-1z" fill="#e0e0e0"/><path d="M1 5.800l.3-2.200 2-.4 .2 2.200zM4.700 5.300l-.2-2.300 2.200-.5 .4 2.400zM8.300 4.700l-.4-2.400 2.200-.500 .6 2.500zM11.900 4.100l-.600-2.500 2.300-.5 .700 2.600z" fill="#e0e0e0"/></svg>
<span class="t" style="left:70.5px;top:1299.74px;color:#cdd0d6;font-size:14.6px;">Elf.tscn</span>
<div style="left:33px;top:1336.42px;width:17px;height:1px;background:#3d4458;"></div>
<svg class="i" style="left:50.37px;top:1328.09px;width:16.67px;height:16.67px;" viewBox="0 0 16 16"><path d="M1 7.200h14v6.800a1 1 0 0 1-1 1H2a1 1 0 0 1-1-1z" fill="#e0e0e0"/><path d="M1 5.800l.3-2.200 2-.4 .2 2.200zM4.700 5.300l-.2-2.300 2.200-.5 .4 2.400zM8.300 4.700l-.4-2.400 2.200-.500 .6 2.500zM11.900 4.100l-.600-2.500 2.300-.5 .700 2.600z" fill="#e0e0e0"/></svg>
<span class="t" style="left:70.5px;top:1326.42px;color:#cdd0d6;font-size:14.6px;letter-spacing:-0.05px;">Elf_Animated.tscn</span>
<div style="left:33px;top:1363.1px;width:17px;height:1px;background:#3d4458;"></div>
<svg class="i" style="left:50.37px;top:1354.76px;width:16.67px;height:16.67px;" viewBox="0 0 16 16"><path d="M1 7.200h14v6.800a1 1 0 0 1-1 1H2a1 1 0 0 1-1-1z" fill="#e0e0e0"/><path d="M1 5.800l.3-2.200 2-.4 .2 2.200zM4.700 5.300l-.2-2.300 2.200-.5 .4 2.400zM8.300 4.700l-.4-2.400 2.200-.500 .6 2.500zM11.900 4.100l-.600-2.500 2.300-.5 .700 2.600z" fill="#e0e0e0"/></svg>
<span class="t" style="left:70.5px;top:1353.10px;color:#cdd0d6;font-size:14.6px;letter-spacing:-0.14px;">Fire_Truck.tscn</span>
<div style="left:254px;top:68.5px;width:2003.5px;height:34.5px;background:#333b4f;"></div>
<div style="left:254px;top:40.5px;width:98.5px;height:28px;background:#262c3b;box-shadow:inset -1px 0 0 #222734;"></div>
<svg class="i" style="left:262.42px;top:45.77px;width:16.67px;height:16.67px;" viewBox="0 0 16 16"><circle cx="8" cy="8" r="5" fill="none" stroke="#fc9c9c" stroke-width="2"/></svg>
<span class="t" style="left:283.35px;top:43.90px;color:#6a7083;font-size:14.6px;letter-spacing:-0.08px;">visualizer</span>
<div style="left:352.5px;top:40.5px;width:108.5px;height:28px;background:#262c3b;box-shadow:inset -1px 0 0 #222734;"></div>
<svg class="i" style="left:364.17px;top:45.77px;width:16.67px;height:16.67px;" viewBox="0 0 16 16"><circle cx="8" cy="8" r="5" fill="none" stroke="#fc9c9c" stroke-width="2"/></svg>
<span class="t" style="left:385.1px;top:43.90px;color:#6a7083;font-size:14.6px;letter-spacing:0.11px;">Ambulanc</span>
<div style="left:461px;top:40.5px;width:108.5px;height:28px;background:#262c3b;box-shadow:inset -1px 0 0 #222734;"></div>
<svg class="i" style="left:471.67px;top:45.77px;width:16.67px;height:16.67px;" viewBox="0 0 16 16"><circle cx="8" cy="8" r="5" fill="none" stroke="#fc9c9c" stroke-width="2"/></svg>
<span class="t" style="left:492.6px;top:43.90px;color:#6a7083;font-size:14.6px;letter-spacing:-0.2px;">Fire_Truck</span>
<div style="left:569.5px;top:40.5px;width:106.5px;height:28px;background:#262c3b;box-shadow:inset -1px 0 0 #222734;"></div>
<svg class="i" style="left:578.41px;top:45.77px;width:16.67px;height:16.67px;" viewBox="0 0 16 16"><circle cx="8" cy="8" r="5" fill="none" stroke="#fc9c9c" stroke-width="2"/></svg>
<span class="t" style="left:599.35px;top:43.90px;color:#6a7083;font-size:14.6px;letter-spacing:0.1px;">FrontLan</span>
<div style="left:676px;top:40.5px;width:105.5px;height:28px;background:#262c3b;box-shadow:inset -1px 0 0 #222734;"></div>
<svg class="i" style="left:686.16px;top:45.77px;width:16.67px;height:16.67px;" viewBox="0 0 16 16"><circle cx="8" cy="8" r="5" fill="none" stroke="#fc9c9c" stroke-width="2"/></svg>
<span class="t" style="left:707.1px;top:43.90px;color:#6a7083;font-size:14.6px;letter-spacing:-0.18px;">Garbage_</span>
<div style="left:781.5px;top:40.5px;width:99.0px;height:28px;background:#262c3b;box-shadow:inset -1px 0 0 #222734;"></div>
<svg class="i" style="left:793.41px;top:45.77px;width:16.67px;height:16.67px;" viewBox="0 0 16 16"><circle cx="8" cy="8" r="5" fill="none" stroke="#fc9c9c" stroke-width="2"/></svg>
<span class="t" style="left:814.35px;top:43.90px;color:#6a7083;font-size:14.6px;letter-spacing:0.11px;">golf_cart</span>
<div style="left:880.5px;top:40.5px;width:108.0px;height:28px;background:#262c3b;box-shadow:inset -1px 0 0 #222734;"></div>
<svg class="i" style="left:890.91px;top:45.77px;width:16.67px;height:16.67px;" viewBox="0 0 16 16"><circle cx="8" cy="8" r="5" fill="none" stroke="#fc9c9c" stroke-width="2"/></svg>
<span class="t" style="left:911.85px;top:43.90px;color:#6a7083;font-size:14.6px;letter-spacing:-0.53px;">School_B</span>
<div style="left:988.5px;top:40.5px;width:90.5px;height:28px;background:#262c3b;box-shadow:inset -1px 0 0 #222734;"></div>
<svg class="i" style="left:998.41px;top:45.77px;width:16.67px;height:16.67px;" viewBox="0 0 16 16"><circle cx="8" cy="8" r="5" fill="none" stroke="#fc9c9c" stroke-width="2"/></svg>
<span class="t" style="left:1019.35px;top:43.90px;color:#6a7083;font-size:14.6px;letter-spacing:-0.04px;">Scooter</span>
<div style="left:1079px;top:40.5px;width:107.5px;height:28px;background:#262c3b;box-shadow:inset -1px 0 0 #222734;"></div>
<svg class="i" style="left:1089.66px;top:45.77px;width:16.67px;height:16.67px;" viewBox="0 0 16 16"><circle cx="8" cy="8" r="5" fill="none" stroke="#fc9c9c" stroke-width="2"/></svg>
<span class="t" style="left:1110.6px;top:43.90px;color:#6a7083;font-size:14.6px;letter-spacing:0.05px;">semi_truc</span>
<div style="left:1186.5px;top:40.5px;width:107.5px;height:28px;background:#262c3b;box-shadow:inset -1px 0 0 #222734;"></div>
<svg class="i" style="left:1196.66px;top:45.77px;width:16.67px;height:16.67px;" viewBox="0 0 16 16"><circle cx="8" cy="8" r="5" fill="none" stroke="#fc9c9c" stroke-width="2"/></svg>
<span class="t" style="left:1217.6px;top:43.90px;color:#6a7083;font-size:14.6px;letter-spacing:-0.05px;">Skateboa</span>
<div style="left:1294px;top:40.5px;width:108.5px;height:28px;background:#262c3b;box-shadow:inset -1px 0 0 #222734;"></div>
<svg class="i" style="left:1304.16px;top:45.77px;width:16.67px;height:16.67px;" viewBox="0 0 16 16"><circle cx="8" cy="8" r="5" fill="none" stroke="#fc9c9c" stroke-width="2"/></svg>
<span class="t" style="left:1325.1px;top:43.90px;color:#6a7083;font-size:14.6px;letter-spacing:-0.26px;">Street_Sw</span>
<div style="left:1402.5px;top:40.5px;width:107.5px;height:28.5px;background:#333b4f;"></div>
<svg class="i" style="left:1411.16px;top:45.77px;width:16.67px;height:16.67px;" viewBox="0 0 16 16"><circle cx="8" cy="8" r="5" fill="none" stroke="#fc9c9c" stroke-width="2"/></svg>
<span class="t" style="left:1432.1px;top:43.90px;color:#dadde2;font-size:14.6px;letter-spacing:0.22px;">Stroller</span>
<div style="left:1510px;top:40.5px;width:107.5px;height:28px;background:#262c3b;box-shadow:inset -1px 0 0 #222734;"></div>
<svg class="i" style="left:1520.41px;top:45.77px;width:16.67px;height:16.67px;" viewBox="0 0 16 16"><circle cx="8" cy="8" r="5" fill="none" stroke="#fc9c9c" stroke-width="2"/></svg>
<span class="t" style="left:1541.35px;top:43.90px;color:#6a7083;font-size:14.6px;letter-spacing:-0.3px;">Three_Wh</span>
<div style="left:1617.5px;top:40.5px;width:83.5px;height:28px;background:#262c3b;box-shadow:inset -1px 0 0 #222734;"></div>
<svg class="i" style="left:1627.91px;top:45.77px;width:16.67px;height:16.67px;" viewBox="0 0 16 16"><circle cx="8" cy="8" r="5" fill="none" stroke="#fc9c9c" stroke-width="2"/></svg>
<span class="t" style="left:1648.85px;top:43.90px;color:#6a7083;font-size:14.6px;letter-spacing:0.06px;">Trailer</span>
<div style="left:1701px;top:40.5px;width:73.5px;height:28px;background:#262c3b;box-shadow:inset -1px 0 0 #222734;"></div>
<svg class="i" style="left:1710.41px;top:45.77px;width:16.67px;height:16.67px;" viewBox="0 0 16 16"><circle cx="8" cy="8" r="5" fill="none" stroke="#fc9c9c" stroke-width="2"/></svg>
<span class="t" style="left:1731.35px;top:43.90px;color:#6a7083;font-size:14.6px;letter-spacing:0.06px;">Train</span>
<div style="left:1774.5px;top:40.5px;width:75.5px;height:28px;background:#262c3b;box-shadow:inset -1px 0 0 #222734;"></div>
<svg class="i" style="left:1784.16px;top:45.77px;width:16.67px;height:16.67px;" viewBox="0 0 16 16"><circle cx="8" cy="8" r="5" fill="none" stroke="#fc9c9c" stroke-width="2"/></svg>
<span class="t" style="left:1805.1px;top:43.90px;color:#6a7083;font-size:14.6px;letter-spacing:0.18px;">Tram</span>
<div style="left:1850px;top:40.5px;width:107.5px;height:28px;background:#262c3b;box-shadow:inset -1px 0 0 #222734;"></div>
<svg class="i" style="left:1859.66px;top:45.77px;width:16.67px;height:16.67px;" viewBox="0 0 16 16"><circle cx="8" cy="8" r="5" fill="none" stroke="#fc9c9c" stroke-width="2"/></svg>
<span class="t" style="left:1880.6px;top:43.90px;color:#6a7083;font-size:14.6px;letter-spacing:-0.08px;">Wheelcha</span>
<div style="left:1957.5px;top:40.5px;width:106.5px;height:28px;background:#262c3b;box-shadow:inset -1px 0 0 #222734;"></div>
<svg class="i" style="left:1966.66px;top:45.77px;width:16.67px;height:16.67px;" viewBox="0 0 16 16"><circle cx="8" cy="8" r="5" fill="none" stroke="#fc9c9c" stroke-width="2"/></svg>
<span class="t" style="left:1987.6px;top:43.90px;color:#6a7083;font-size:14.6px;letter-spacing:-0.27px;">apviz_zoo</span>
<svg class="i" style="left:1490.16px;top:46.16px;width:16.67px;height:16.67px;" viewBox="0 0 16 16"><path d="M3 3l10 10M13 3L3 13" stroke="#e0e0e0" stroke-width="2.200" stroke-linecap="round"/></svg>
<svg class="i" style="left:2072.16px;top:46.16px;width:16.67px;height:16.67px;" viewBox="0 0 16 16"><path d="M7 1v6H1v2h6v6h2V9h6V7H9V1z" fill="#858b99"/></svg>
<svg class="i" style="left:2236.16px;top:46.16px;width:16.67px;height:16.67px;" viewBox="0 0 16 16"><g fill="#e0e0e0"><path d="M1 1h5L4.300 2.700 6.800 5.200 5.200 6.800 2.700 4.300 1 6z"/><path d="M15 1v5l-1.700-1.700-2.500 2.500-1.600-1.600 2.500-2.500L10 1z"/><path d="M1 15v-5l1.700 1.700 2.500-2.500 1.600 1.600-2.500 2.500L6 15z"/><path d="M15 15h-5l1.700-1.700-2.500-2.500 1.600-1.600 2.500 2.500L15 10z"/></g></svg>
<svg class="i" style="left:259.67px;top:77.16px;width:16.67px;height:16.67px;" viewBox="0 0 16 16"><path d="M2 1.500l4.200 12.200 2.100-3.700 4.200 4.200 1.700-1.700-4.200-4.200 3.700-2.100z" fill="#e0e0e0"/></svg>
<svg class="i" style="left:298.67px;top:77.16px;width:16.67px;height:16.67px;" viewBox="0 0 16 16"><g fill="#5f8fd8"><circle cx="8" cy="8" r="2"/><path d="M8 .8l2.800 2.900-1.100 1.100L8 3.100 6.300 4.800 5.200 3.700z"/><path d="M8 15.200l-2.800-2.900 1.100-1.100L8 12.900l1.700-1.700 1.100 1.100z"/><path d="M.8 8l2.900-2.800 1.100 1.100L3.100 8l1.700 1.700-1.100 1.100z"/><path d="M15.200 8l-2.900 2.800-1.100-1.100L12.900 8l-1.700-1.700 1.100-1.100z"/></g></svg>
<svg class="i" style="left:331.06px;top:77.16px;width:16.67px;height:16.67px;" viewBox="0 0 16 16"><circle cx="8" cy="8" r="2" fill="#e0e0e0"/><path d="M4.100 12.500A6 6 0 1 1 12.600 11.900" fill="none" stroke="#e0e0e0" stroke-width="2" stroke-linecap="round"/><path d="M1.800 10.400h4.400v4.400z" fill="#e0e0e0"/></svg>
<svg class="i" style="left:362.87px;top:77.16px;width:16.67px;height:16.67px;" viewBox="0 0 16 16"><circle cx="8" cy="8" r="2" fill="#e0e0e0"/><path d="M9.500 1H15v5.500l-1.700-1.700-1.800 1.800-1.600-1.600 1.800-1.800z" fill="#e0e0e0"/><path d="M6.500 15H1V9.500l1.700 1.700 1.800-1.800 1.600 1.600-1.800 1.800z" fill="#e0e0e0"/></svg>
<svg class="i" style="left:401.37px;top:77.16px;width:16.67px;height:16.67px;" viewBox="0 0 16 16"><path d="M1.500 1.500h10v2.200h-7.600v2.700h7.600v2.200h-7.600v2.800h4v2.200h-6.400z" fill="#e0e0e0"/><path d="M8.600 8.600l2.300 6.700 1.200-2 2.100 2.100 1-1-2.100-2.100 2-1.200z" fill="#e0e0e0"/></svg>
<svg class="i" style="left:433.67px;top:77.16px;width:16.67px;height:16.67px;opacity:0.45;" viewBox="0 0 16 16"><path d="M2.500 8h11v6.500h-11z" fill="#e0e0e0"/><path d="M4.800 8V5.200a3.200 3.200 0 0 1 6.400 0V8" fill="none" stroke="#e0e0e0" stroke-width="2"/><rect x="7.200" y="10" width="1.600" height="2.600" fill="#333b4f"/></svg>
<svg class="i" style="left:466.06px;top:77.16px;width:16.67px;height:16.67px;opacity:0.45;" viewBox="0 0 16 16"><g fill="#e0e0e0"><rect x="1" y="1" width="2" height="2"/><rect x="7" y="1" width="2" height="2"/><rect x="13" y="1" width="2" height="2"/><rect x="1" y="7" width="2" height="2"/><rect x="13" y="7" width="2" height="2"/><rect x="1" y="13" width="2" height="2"/><rect x="7" y="13" width="2" height="2"/><rect x="13" y="13" width="2" height="2"/><rect x="4" y="4" width="5" height="5" opacity=".7"/><rect x="7" y="7" width="5" height="5" opacity=".7"/></g></svg>
<svg class="i" style="left:504.46px;top:77.16px;width:16.67px;height:16.67px;" viewBox="0 0 16 16"><path d="M8 .8L1.500 4v8L8 15.200l6.500-3.200V4z" fill="#e0e0e0"/><path d="M8 3.200L5 4.700l3 1.500 3-1.500z" fill="#333b4f"/><path d="M3.300 6.800v3.600L6.500 12V8.400z" fill="#333b4f"/></svg>
<svg class="i" style="left:537.66px;top:77.16px;width:16.67px;height:16.67px;" viewBox="0 0 16 16"><g fill="#e0e0e0"><circle cx="2.500" cy="2.500" r="1.200"/><circle cx="8" cy="2.500" r="1.200"/><circle cx="2.500" cy="8" r="1.200"/></g><path d="M7 15V10.500a3.300 3.300 0 0 1 6.600 0V15" fill="none" stroke="#e0e0e0" stroke-width="2.200"/></svg>
<svg class="i" style="left:574.66px;top:77.16px;width:16.67px;height:16.67px;" viewBox="0 0 16 16"><path d="M2.500 7h8.500v6H2.500z" fill="#c07a7a"/><circle cx="4.800" cy="5" r="2.600" fill="#c07a7a"/><circle cx="9.500" cy="4.500" r="3" fill="#c07a7a"/><path d="M11 9.200l3.500-2v5.600l-3.500-2z" fill="#c07a7a"/></svg>
<div style="left:287.3px;top:72px;width:1px;height:27px;background:#2b3243;"></div>
<div style="left:391px;top:72px;width:1px;height:27px;background:#2b3243;"></div>
<div style="left:563.4px;top:72px;width:1px;height:27px;background:#2b3243;"></div>
<div style="left:601.9px;top:72px;width:1px;height:27px;background:#2b3243;"></div>
<div style="left:756px;top:72px;width:1px;height:27px;background:#2b3243;"></div>
<span class="t" style="left:614px;top:75.50px;color:#d5d8dd;font-size:14.6px;letter-spacing:0.38px;">Transform</span>
<span class="t" style="left:699.8px;top:75.50px;color:#d5d8dd;font-size:14.6px;">View</span>
<svg style="left:254.500px;top:103px" width="2003" height="1237.500" viewBox="254.500 103 2003 1237.500"><rect x="254.500" y="103" width="2003" height="1237.500" fill="#000"/><path d="M1962.4 515.4L2001.2 518.0M2001.2 518.0L2042.4 520.8M2042.4 520.8L2086.0 523.7M2086.0 523.7L2132.3 526.9M2132.3 526.9L2181.7 530.2M2181.7 530.2L2234.4 533.7M2234.4 533.7L2290.7 537.5M2290.7 537.5L2351.0 541.6M995.1 499.7L969.0 500.9M969.0 500.9L942.0 502.2M942.0 502.2L914.2 503.5M914.2 503.5L885.3 504.9M885.3 504.9L855.5 506.3M855.5 506.3L824.6 507.7M824.6 507.7L792.6 509.3M792.6 509.3L759.5 510.8M759.5 510.8L725.1 512.4M725.1 512.4L689.3 514.1M689.3 514.1L652.2 515.9M652.2 515.9L613.6 517.7M613.6 517.7L573.4 519.6M573.4 519.6L531.6 521.6M531.6 521.6L488.0 523.6M488.0 523.6L442.5 525.8M442.5 525.8L395.0 528.0M395.0 528.0L345.4 530.4M345.4 530.4L293.5 532.8M293.5 532.8L239.1 535.4M239.1 535.4L182.1 538.1M1732.5 505.8L1761.3 507.8M1761.3 507.8L1791.5 510.0M1791.5 510.0L1823.4 512.3M1823.4 512.3L1857.0 514.8M1857.0 514.8L1892.6 517.4M1892.6 517.4L1930.2 520.1M1930.2 520.1L1970.1 523.0M1164.8 496.9L1142.4 498.0M1142.4 498.0L1119.3 499.2M1119.3 499.2L1095.4 500.4M1095.4 500.4L1070.7 501.7M1070.7 501.7L1045.2 503.0M1045.2 503.0L1018.8 504.3M1591.1 501.4L1614.8 503.3M1614.8 503.3L1639.7 505.2M1639.7 505.2L1665.9 507.3M1665.9 507.3L1693.5 509.5M1693.5 509.5L1722.5 511.7M1283.4 496.4L1262.9 497.6M1262.9 497.6L1241.9 498.7M1241.9 498.7L1220.1 499.9M1220.1 499.9L1197.6 501.2M1197.6 501.2L1174.4 502.4M1483.5 499.2L1504.0 501.0M1504.0 501.0L1525.5 502.8M1525.5 502.8L1548.1 504.7M1548.1 504.7L1571.8 506.8M1382.0 497.1L1362.9 498.2M1362.9 498.2L1343.2 499.4M1343.2 499.4L1322.8 500.6M1322.8 500.6L1301.8 501.9M1382.0 497.1L1399.6 498.8M1399.6 498.8L1418.0 500.5M1418.0 500.5L1437.4 502.3M1437.4 502.3L1457.7 504.2M1464.7 498.9L1446.4 500.1M1446.4 500.1L1427.6 501.4M1427.6 501.4L1408.1 502.7M1301.0 496.7L1316.7 498.3M1316.7 498.3L1333.1 500.0M1333.1 500.0L1350.3 501.8M1551.7 500.9L1534.4 502.1M1534.4 502.1L1516.5 503.5M1516.5 503.5L1498.1 504.8M1220.9 496.3L1234.7 497.9M1234.7 497.9L1249.2 499.6M1249.2 499.6L1264.3 501.4M1643.3 502.9L1627.1 504.3M1627.1 504.3L1610.4 505.6M1610.4 505.6L1593.0 507.1M1153.7 497.5L1166.2 499.1M1166.2 499.1L1179.3 500.9M1179.3 500.9L1193.0 502.7M1725.0 506.5L1709.5 507.9M1709.5 507.9L1693.5 509.5M1084.3 498.7L1095.4 500.4M1095.4 500.4L1107.0 502.2M1828.5 508.8L1814.5 510.4M1814.5 510.4L1799.9 512.0M1799.9 512.0L1784.8 513.7M1012.4 500.0L1022.0 501.8M1022.0 501.8L1032.1 503.6M1925.7 513.0L1912.8 514.7M1912.8 514.7L1899.5 516.4M1899.5 516.4L1885.6 518.3M938.1 501.3L946.1 503.1M946.1 503.1L954.4 505.1M2021.5 519.4L2009.7 521.4M2009.7 521.4L1997.3 523.4M861.1 502.7L867.3 504.6M867.3 504.6L873.9 506.6M873.9 506.6L880.8 508.7M2269.7 533.0L2262.0 535.6M2262.0 535.6L2254.0 538.3M703.4 509.8L706.0 512.1M706.0 512.1L708.7 514.5M613.3 513.9L613.5 516.4M613.5 516.4L613.7 519.1M514.2 518.3L511.5 521.1M511.5 521.1L508.5 524.1M404.6 523.3L398.3 526.4M398.3 526.4L391.6 529.7M282.9 528.8L272.2 532.3M272.2 532.3L260.8 535.9M260.8 535.9L248.5 539.9" stroke="rgb(6,6,9)" stroke-width="1.1" fill="none"/><path d="M1970.1 523.0L2012.5 526.0M2012.5 526.0L2057.6 529.3M2057.6 529.3L2105.7 532.8M2105.7 532.8L2157.1 536.5M2157.1 536.5L2212.1 540.5M2212.1 540.5L2271.2 544.8M2271.2 544.8L2334.8 549.4M1018.8 504.3L991.5 505.7M991.5 505.7L963.2 507.1M963.2 507.1L933.9 508.6M933.9 508.6L903.6 510.2M903.6 510.2L872.1 511.8M872.1 511.8L839.5 513.4M839.5 513.4L805.5 515.2M805.5 515.2L770.3 516.9M770.3 516.9L733.6 518.8M733.6 518.8L695.4 520.8M695.4 520.8L655.6 522.8M655.6 522.8L614.1 524.9M614.1 524.9L570.8 527.1M570.8 527.1L525.5 529.4M525.5 529.4L478.2 531.8M478.2 531.8L428.7 534.3M428.7 534.3L376.8 536.9M376.8 536.9L322.3 539.7M322.3 539.7L265.1 542.6M265.1 542.6L205.0 545.7M205.0 545.7L141.6 548.9M1722.5 511.7L1753.2 514.1M1753.2 514.1L1785.5 516.7M1785.5 516.7L1819.7 519.4M1819.7 519.4L1856.0 522.2M1856.0 522.2L1894.5 525.2M1174.4 502.4L1150.4 503.8M1150.4 503.8L1125.5 505.1M1125.5 505.1L1099.8 506.5M1099.8 506.5L1073.2 508.0M1073.2 508.0L1045.6 509.5M1571.8 506.8L1596.8 508.9M1596.8 508.9L1623.0 511.1M1623.0 511.1L1650.7 513.5M1650.7 513.5L1680.0 516.0M1301.8 501.9L1280.1 503.2M1280.1 503.2L1257.7 504.6M1257.7 504.6L1234.5 506.0M1234.5 506.0L1210.4 507.4M1457.7 504.2L1479.0 506.2M1479.0 506.2L1501.3 508.3M1501.3 508.3L1524.9 510.5M1408.1 502.7L1388.0 504.0M1388.0 504.0L1367.2 505.4M1367.2 505.4L1345.6 506.8M1345.6 506.8L1323.3 508.3M1350.3 501.8L1368.3 503.7M1368.3 503.7L1387.3 505.7M1387.3 505.7L1407.2 507.8M1498.1 504.8L1479.0 506.2M1479.0 506.2L1459.2 507.7M1459.2 507.7L1438.7 509.2M1264.3 501.4L1280.1 503.2M1280.1 503.2L1296.8 505.2M1296.8 505.2L1314.3 507.2M1593.0 507.1L1575.1 508.6M1575.1 508.6L1556.5 510.1M1556.5 510.1L1537.2 511.7M1193.0 502.7L1207.4 504.7M1207.4 504.7L1222.5 506.7M1693.5 509.5L1676.9 511.0M1676.9 511.0L1659.6 512.7M1659.6 512.7L1641.7 514.4M1107.0 502.2L1119.2 504.1M1119.2 504.1L1132.0 506.1M1132.0 506.1L1145.5 508.2M1784.8 513.7L1769.1 515.4M1769.1 515.4L1752.8 517.2M1752.8 517.2L1735.8 519.1M1032.1 503.6L1042.6 505.6M1042.6 505.6L1053.7 507.7M1053.7 507.7L1065.4 509.9M1885.6 518.3L1871.1 520.2M1871.1 520.2L1856.0 522.2M1856.0 522.2L1840.3 524.3M954.4 505.1L963.2 507.1M963.2 507.1L972.5 509.3M972.5 509.3L982.2 511.6M1997.3 523.4L1984.5 525.6M1984.5 525.6L1971.0 527.8M1971.0 527.8L1957.0 530.1M880.8 508.7L888.0 511.0M888.0 511.0L895.7 513.3M2254.0 538.3L2245.5 541.1M2245.5 541.1L2236.6 544.1M2236.6 544.1L2227.2 547.2M708.7 514.5L711.6 517.1M711.6 517.1L714.7 519.8M613.7 519.1L613.9 521.9M613.9 521.9L614.1 524.9M508.5 524.1L505.4 527.2M505.4 527.2L502.1 530.6M391.6 529.7L384.4 533.2M384.4 533.2L376.8 536.9M376.8 536.9L368.6 541.0M248.5 539.9L235.4 544.1M235.4 544.1L221.3 548.7" stroke="rgb(7,7,10)" stroke-width="1.1" fill="none"/><path d="M1894.5 525.2L1935.5 528.4M1935.5 528.4L1979.2 531.9M1979.2 531.9L2025.8 535.5M2025.8 535.5L2075.7 539.4M2075.7 539.4L2129.3 543.6M2129.3 543.6L2186.9 548.2M2186.9 548.2L2249.0 553.0M2249.0 553.0L2316.3 558.3M1045.6 509.5L1017.0 511.1M1017.0 511.1L987.3 512.7M987.3 512.7L956.5 514.4M956.5 514.4L924.4 516.2M924.4 516.2L891.1 518.0M891.1 518.0L856.4 519.9M856.4 519.9L820.3 521.9M355.1 547.6L294.8 550.9M294.8 550.9L231.1 554.4M231.1 554.4L163.9 558.1M1680.0 516.0L1710.9 518.6M1710.9 518.6L1743.7 521.5M1743.7 521.5L1778.5 524.4M1778.5 524.4L1815.5 527.6M1210.4 507.4L1185.5 508.9M1185.5 508.9L1159.7 510.5M1159.7 510.5L1132.9 512.1M1132.9 512.1L1105.0 513.7M1524.9 510.5L1549.8 512.9M1549.8 512.9L1576.0 515.3M1576.0 515.3L1603.7 517.9M1323.3 508.3L1300.2 509.8M1300.2 509.8L1276.2 511.4M1276.2 511.4L1251.3 513.0M1407.2 507.8L1428.1 510.0M1428.1 510.0L1450.2 512.3M1450.2 512.3L1473.5 514.7M1438.7 509.2L1417.4 510.7M1417.4 510.7L1395.3 512.4M1395.3 512.4L1372.4 514.0M1314.3 507.2L1332.6 509.4M1332.6 509.4L1352.0 511.6M1352.0 511.6L1372.4 514.0M1537.2 511.7L1517.1 513.3M1517.1 513.3L1496.3 515.1M1222.5 506.7L1238.4 508.8M1238.4 508.8L1255.2 511.0M1255.2 511.0L1272.8 513.4M1641.7 514.4L1623.1 516.1M1623.1 516.1L1603.7 517.9M1145.5 508.2L1159.7 510.5M1159.7 510.5L1174.6 512.8M1735.8 519.1L1718.1 521.0M1718.1 521.0L1699.7 523.0M1065.4 509.9L1077.7 512.2M1077.7 512.2L1090.7 514.6M1840.3 524.3L1823.9 526.5M982.2 511.6L992.5 514.0M992.5 514.0L1003.4 516.5M1957.0 530.1L1942.3 532.6M1942.3 532.6L1926.9 535.1M895.7 513.3L903.7 515.8M903.7 515.8L912.3 518.4M2227.2 547.2L2217.4 550.5M714.7 519.8L717.9 522.6M717.9 522.6L721.3 525.7M614.1 524.9L614.3 528.1M614.3 528.1L614.6 531.5M502.1 530.6L498.6 534.1M498.6 534.1L494.9 538.0M368.6 541.0L359.7 545.3M359.7 545.3L350.3 549.9M221.3 548.7L206.1 553.6M206.1 553.6L189.6 558.9" stroke="rgb(8,8,11)" stroke-width="1.1" fill="none"/><path d="M820.3 521.9L782.7 524.0M782.7 524.0L743.4 526.2M743.4 526.2L702.4 528.4M702.4 528.4L659.5 530.8M659.5 530.8L614.7 533.3M614.7 533.3L567.7 535.8M567.7 535.8L518.4 538.6M518.4 538.6L466.7 541.4M466.7 541.4L412.3 544.4M412.3 544.4L355.1 547.6M1815.5 527.6L1854.8 531.0M1854.8 531.0L1896.9 534.6M1896.9 534.6L1941.8 538.4M1941.8 538.4L1990.1 542.5M1990.1 542.5L2041.9 547.0M1105.0 513.7L1076.1 515.5M1076.1 515.5L1046.1 517.3M1046.1 517.3L1014.8 519.2M1014.8 519.2L982.3 521.1M1603.7 517.9L1633.1 520.7M1633.1 520.7L1664.2 523.6M1664.2 523.6L1697.3 526.7M1251.3 513.0L1225.5 514.8M1225.5 514.8L1198.6 516.5M1473.5 514.7L1498.1 517.3M1498.1 517.3L1524.2 520.0M1372.4 514.0L1348.6 515.8M1348.6 515.8L1323.9 517.6M1372.4 514.0L1394.0 516.6M1394.0 516.6L1416.9 519.3M1496.3 515.1L1474.7 516.9M1474.7 516.9L1452.2 518.7M1272.8 513.4L1291.5 515.9M1603.7 517.9L1583.6 519.9M1583.6 519.9L1562.6 521.8M1174.6 512.8L1190.4 515.2M1190.4 515.2L1207.0 517.8M1699.7 523.0L1680.5 525.2M1090.7 514.6L1104.5 517.2M1823.9 526.5L1806.8 528.7M1806.8 528.7L1788.9 531.1M1003.4 516.5L1014.8 519.2M1926.9 535.1L1910.8 537.8M912.3 518.4L921.3 521.2M921.3 521.2L930.9 524.2M2217.4 550.5L2207.0 554.0M2207.0 554.0L2196.0 557.7M721.3 525.7L725.0 528.9M725.0 528.9L728.9 532.4M614.6 531.5L614.8 535.1M614.8 535.1L615.1 539.0M494.9 538.0L490.8 542.1M490.8 542.1L486.5 546.4M350.3 549.9L340.0 554.9" stroke="rgb(9,9,12)" stroke-width="1.1" fill="none"/><path d="M2041.9 547.0L2097.8 551.7M2097.8 551.7L2158.2 556.9M2158.2 556.9L2223.7 562.5M2223.7 562.5L2294.9 568.6M2294.9 568.6L2372.8 575.3M982.3 521.1L948.4 523.1M948.4 523.1L913.0 525.3M913.0 525.3L876.1 527.5M876.1 527.5L837.5 529.8M837.5 529.8L797.2 532.2M797.2 532.2L754.9 534.8M754.9 534.8L710.7 537.4M710.7 537.4L664.2 540.2M615.4 543.2L564.0 546.2M564.0 546.2L509.9 549.5M509.9 549.5L452.9 552.9M452.9 552.9L392.6 556.5M392.6 556.5L328.9 560.4M328.9 560.4L261.4 564.4M261.4 564.4L189.7 568.7M1697.3 526.7L1732.6 530.1M1732.6 530.1L1770.2 533.6M1770.2 533.6L1810.4 537.4M1198.6 516.5L1170.6 518.4M1170.6 518.4L1141.6 520.3M1141.6 520.3L1111.3 522.3M1524.2 520.0L1551.8 522.9M1551.8 522.9L1581.1 525.9M1581.1 525.9L1612.3 529.2M1323.9 517.6L1298.2 519.5M1298.2 519.5L1271.4 521.5M1416.9 519.3L1441.1 522.1M1441.1 522.1L1466.8 525.1M1452.2 518.7L1428.8 520.7M1428.8 520.7L1404.4 522.7M1291.5 515.9L1311.2 518.5M1311.2 518.5L1332.1 521.3M1562.6 521.8L1540.7 523.9M1540.7 523.9L1517.9 526.1M1207.0 517.8L1224.7 520.6M1680.5 525.2L1660.5 527.4M1660.5 527.4L1639.5 529.7M1104.5 517.2L1119.0 519.9M1119.0 519.9L1134.4 522.8M1788.9 531.1L1770.2 533.6M1770.2 533.6L1750.5 536.2M1014.8 519.2L1027.0 522.0M1027.0 522.0L1039.9 525.0M1910.8 537.8L1893.9 540.6M1893.9 540.6L1876.1 543.6M930.9 524.2L941.1 527.3M2196.0 557.7L2184.3 561.6M728.9 532.4L733.1 536.1M615.1 539.0L615.4 543.2M486.5 546.4L481.8 551.2M340.0 554.9L328.9 560.4M328.9 560.4L316.8 566.3" stroke="rgb(10,10,13)" stroke-width="1.1" fill="none"/><path d="M664.2 540.2L615.4 543.2M1810.4 537.4L1853.4 541.4M1853.4 541.4L1899.7 545.8M1899.7 545.8L1949.5 550.5M1949.5 550.5L2003.3 555.5M2003.3 555.5L2061.7 561.0M1111.3 522.3L1079.7 524.4M1079.7 524.4L1046.7 526.6M1046.7 526.6L1012.3 528.8M1012.3 528.8L976.3 531.2M1612.3 529.2L1645.6 532.7M1645.6 532.7L1681.2 536.4M1271.4 521.5L1243.4 523.5M1243.4 523.5L1214.3 525.7M1466.8 525.1L1494.1 528.3M1494.1 528.3L1523.2 531.7M1404.4 522.7L1378.9 524.8M1378.9 524.8L1352.4 527.0M1332.1 521.3L1354.2 524.3M1354.2 524.3L1377.8 527.5M1517.9 526.1L1494.1 528.3M1494.1 528.3L1469.2 530.7M1224.7 520.6L1243.4 523.5M1243.4 523.5L1263.3 526.6M1639.5 529.7L1617.6 532.1M1617.6 532.1L1594.7 534.6M1134.4 522.8L1150.7 525.8M1750.5 536.2L1730.0 538.9M1039.9 525.0L1053.7 528.2M1876.1 543.6L1857.4 546.7M941.1 527.3L952.0 530.7M2184.3 561.6L2172.0 565.8M2172.0 565.8L2158.9 570.1M733.1 536.1L737.5 540.0M615.4 543.2L615.7 547.6M481.8 551.2L476.7 556.3M316.8 566.3L303.7 572.7" stroke="rgb(12,12,15)" stroke-width="1.1" fill="none"/><path d="M2061.7 561.0L2125.1 567.0M2125.1 567.0L2194.2 573.5M2194.2 573.5L2270.0 580.6M2270.0 580.6L2353.4 588.4M976.3 531.2L938.6 533.7M938.6 533.7L899.1 536.3M899.1 536.3L857.7 539.1M857.7 539.1L814.3 541.9M814.3 541.9L768.6 545.0M768.6 545.0L720.5 548.1M720.5 548.1L669.7 551.5M669.7 551.5L616.2 555.0M616.2 555.0L559.6 558.8M559.6 558.8L499.7 562.7M499.7 562.7L436.1 566.9M436.1 566.9L368.5 571.4M368.5 571.4L296.6 576.2M296.6 576.2L219.9 581.2M219.9 581.2L137.9 586.7M1681.2 536.4L1719.3 540.3M1719.3 540.3L1760.2 544.6M1760.2 544.6L1804.2 549.2M1214.3 525.7L1183.9 527.9M1183.9 527.9L1152.1 530.2M1152.1 530.2L1118.8 532.7M1523.2 531.7L1554.3 535.4M1554.3 535.4L1587.6 539.3M1352.4 527.0L1324.6 529.3M1324.6 529.3L1295.6 531.7M1377.8 527.5L1402.9 530.8M1402.9 530.8L1429.6 534.4M1469.2 530.7L1443.1 533.1M1263.3 526.6L1284.5 529.9M1594.7 534.6L1570.7 537.3M1150.7 525.8L1168.1 529.1M1168.1 529.1L1186.7 532.5M1730.0 538.9L1708.3 541.8M1053.7 528.2L1068.3 531.6M1068.3 531.6L1084.0 535.2M1857.4 546.7L1837.7 549.9M952.0 530.7L963.5 534.3M963.5 534.3L975.9 538.1M2158.9 570.1L2144.9 574.8M737.5 540.0L742.3 544.3M742.3 544.3L747.4 548.9M615.7 547.6L616.0 552.5M616.0 552.5L616.4 557.7M476.7 556.3L471.3 561.9M471.3 561.9L465.3 567.9M303.7 572.7L289.3 579.8" stroke="rgb(13,13,16)" stroke-width="1.1" fill="none"/><path d="M1804.2 549.2L1851.7 554.2M1851.7 554.2L1903.1 559.5M1903.1 559.5L1959.0 565.4M1118.8 532.7L1084.0 535.2M1084.0 535.2L1047.5 537.9M1047.5 537.9L1009.1 540.7M1587.6 539.3L1623.3 543.5M1623.3 543.5L1661.7 548.0M1295.6 531.7L1265.3 534.2M1265.3 534.2L1233.4 536.8M1429.6 534.4L1458.3 538.3M1443.1 533.1L1415.8 535.7M1415.8 535.7L1387.2 538.4M1284.5 529.9L1307.1 533.5M1307.1 533.5L1331.3 537.2M1570.7 537.3L1545.4 540.1M1186.7 532.5L1206.5 536.2M1708.3 541.8L1685.6 544.8M1685.6 544.8L1661.7 548.0M1084.0 535.2L1100.7 539.1M1837.7 549.9L1816.9 553.4M975.9 538.1L989.2 542.2M2144.9 574.8L2130.1 579.8M747.4 548.9L753.0 553.8M616.4 557.7L616.8 563.4M465.3 567.9L458.8 574.5M289.3 579.8L273.4 587.5" stroke="rgb(14,14,17)" stroke-width="1.1" fill="none"/><path d="M1959.0 565.4L2019.9 571.7M2019.9 571.7L2086.5 578.7M2086.5 578.7L2159.8 586.3M2159.8 586.3L2240.6 594.8M2240.6 594.8L2330.4 604.1M1009.1 540.7L968.8 543.7M968.8 543.7L926.5 546.8M926.5 546.8L881.8 550.1M338.4 590.0L255.9 596.1M255.9 596.1L167.2 602.6M1661.7 548.0L1703.1 552.8M1233.4 536.8L1200.1 539.6M1200.1 539.6L1165.0 542.5M1458.3 538.3L1489.0 542.4M1489.0 542.4L1522.0 546.8M1387.2 538.4L1357.2 541.3M1331.3 537.2L1357.2 541.3M1545.4 540.1L1518.9 543.0M1518.9 543.0L1491.1 546.1M1206.5 536.2L1227.8 540.2M1661.7 548.0L1636.5 551.3M1100.7 539.1L1118.7 543.3M1816.9 553.4L1795.0 557.0M989.2 542.2L1003.5 546.6M2130.1 579.8L2114.2 585.1M753.0 553.8L759.0 559.1M616.8 563.4L617.2 569.5M458.8 574.5L451.7 581.7M273.4 587.5L255.9 596.1" stroke="rgb(15,15,18)" stroke-width="1.1" fill="none"/><path d="M881.8 550.1L834.7 553.6M834.7 553.6L785.0 557.2M785.0 557.2L732.3 561.1M732.3 561.1L676.5 565.2M676.5 565.2L617.2 569.5M617.2 569.5L554.2 574.2M554.2 574.2L487.0 579.1M487.0 579.1L415.2 584.4M415.2 584.4L338.4 590.0M1703.1 552.8L1747.9 558.1M1747.9 558.1L1796.6 563.8M1796.6 563.8L1849.5 570.0M1165.0 542.5L1128.1 545.5M1522.0 546.8L1557.6 551.6M1357.2 541.3L1325.6 544.3M1357.2 541.3L1385.0 545.6M1491.1 546.1L1461.7 549.3M1227.8 540.2L1250.5 544.5M1636.5 551.3L1609.9 554.9M1118.7 543.3L1138.0 547.8M1795.0 557.0L1771.7 560.9M1003.5 546.6L1018.9 551.4M2114.2 585.1L2097.2 590.8M759.0 559.1L765.5 564.9M451.7 581.7L443.8 589.7M255.9 596.1L236.4 605.6" stroke="rgb(16,16,19)" stroke-width="1.1" fill="none"/><path d="M1849.5 570.0L1907.4 576.8M1907.4 576.8L1971.0 584.3M1128.1 545.5L1089.3 548.7M1089.3 548.7L1048.4 552.1M1048.4 552.1L1005.2 555.7M1557.6 551.6L1596.0 556.7M1596.0 556.7L1637.7 562.3M1325.6 544.3L1292.3 547.4M1292.3 547.4L1257.3 550.7M1385.0 545.6L1414.9 550.3M1461.7 549.3L1430.8 552.8M1250.5 544.5L1275.1 549.0M1609.9 554.9L1581.8 558.6M1138.0 547.8L1158.8 552.7M1771.7 560.9L1747.1 565.0M1018.9 551.4L1035.6 556.5M2097.2 590.8L2078.9 596.9M617.2 569.5L617.7 576.3M236.4 605.6L214.7 616.3" stroke="rgb(17,17,20)" stroke-width="1.1" fill="none"/><path d="M1971.0 584.3L2041.1 592.5M2041.1 592.5L2118.8 601.6M2118.8 601.6L2205.3 611.8M2205.3 611.8L2302.4 623.2M2302.4 623.2L2412.1 636.0M1005.2 555.7L959.5 559.5M959.5 559.5L911.0 563.5M299.4 614.1L202.9 622.1M1637.7 562.3L1683.1 568.4M1257.3 550.7L1220.4 554.2M1414.9 550.3L1447.3 555.3M1447.3 555.3L1482.3 560.8M1430.8 552.8L1398.1 556.4M1275.1 549.0L1301.5 554.0M1581.8 558.6L1552.0 562.5M1158.8 552.7L1181.3 557.9M1747.1 565.0L1721.0 569.3M765.5 564.9L772.7 571.2M2314.3 615.1L2302.4 623.2M617.7 576.3L618.2 583.7M443.8 589.7L435.1 598.5M214.7 616.3L190.3 628.2" stroke="rgb(18,18,21)" stroke-width="1.1" fill="none"/><path d="M911.0 563.5L859.7 567.7M859.7 567.7L805.1 572.2M805.1 572.2L746.9 577.1M746.9 577.1L684.9 582.2M684.9 582.2L618.5 587.7M618.5 587.7L547.3 593.6M547.3 593.6L470.9 599.9M470.9 599.9L388.5 606.7M388.5 606.7L299.4 614.1M1683.1 568.4L1732.6 575.0M1732.6 575.0L1786.9 582.3M1220.4 554.2L1181.3 557.9M1181.3 557.9L1140.0 561.8M1482.3 560.8L1520.4 566.7M1398.1 556.4L1363.5 560.2M1301.5 554.0L1330.2 559.3M1552.0 562.5L1520.4 566.7M1721.0 569.3L1693.2 574.0M1035.6 556.5L1053.6 562.1M2078.9 596.9L2059.2 603.5M772.7 571.2L780.4 578.2M2302.4 623.2L2289.5 632.0M618.2 583.7L618.8 591.9M435.1 598.5L425.5 608.3" stroke="rgb(19,19,22)" stroke-width="1.1" fill="none"/><path d="M1786.9 582.3L1846.8 590.3M1140.0 561.8L1096.1 566.0M1520.4 566.7L1561.9 573.2M1363.5 560.2L1326.8 564.2M1330.2 559.3L1361.3 565.1M1520.4 566.7L1486.8 571.2M1181.3 557.9L1205.8 563.6M1693.2 574.0L1663.5 578.9M1053.6 562.1L1073.2 568.1M2059.2 603.5L2038.0 610.6M780.4 578.2L789.0 585.7M425.5 608.3L414.7 619.2" stroke="rgb(20,20,23)" stroke-width="1.1" fill="none"/><path d="M1846.8 590.3L1913.0 599.2M1913.0 599.2L1986.7 609.0M1986.7 609.0L2069.2 620.1M1096.1 566.0L1049.6 570.4M1049.6 570.4L1000.0 575.1M1561.9 573.2L1607.5 580.3M1326.8 564.2L1287.9 568.5M1361.3 565.1L1395.2 571.5M1486.8 571.2L1451.1 575.9M1205.8 563.6L1232.4 569.8M1663.5 578.9L1631.9 584.1M1073.2 568.1L1094.6 574.7M2038.0 610.6L2015.1 618.3M2289.5 632.0L2275.5 641.6M618.8 591.9L619.4 600.9" stroke="rgb(22,22,25)" stroke-width="1.1" fill="none"/><path d="M2069.2 620.1L2162.3 632.5M2162.3 632.5L2267.9 646.7M2267.9 646.7L2389.0 662.9M1000.0 575.1L947.2 580.0M947.2 580.0L890.8 585.4M890.8 585.4L830.3 591.1M449.8 627.1L353.1 636.2M353.1 636.2L247.3 646.3M247.3 646.3L131.0 657.3M1607.5 580.3L1657.5 588.1M1287.9 568.5L1246.6 573.1M1246.6 573.1L1202.5 578.0M1395.2 571.5L1432.3 578.4M1232.4 569.8L1261.5 576.6M789.0 585.7L798.4 594.1M2275.5 641.6L2260.0 652.1M619.4 600.9L620.1 611.0M414.7 619.2L402.5 631.6" stroke="rgb(23,23,26)" stroke-width="1.1" fill="none"/><path d="M830.3 591.1L765.4 597.2M765.4 597.2L695.5 603.9M695.5 603.9L620.1 611.0M620.1 611.0L538.5 618.7M538.5 618.7L449.8 627.1M1657.5 588.1L1712.9 596.8M1712.9 596.8L1774.4 606.4M1202.5 578.0L1155.5 583.2M1432.3 578.4L1473.1 586.0M1451.1 575.9L1413.0 581.0M1261.5 576.6L1293.4 584.0M1631.9 584.1L1598.0 589.8M1094.6 574.7L1118.1 582.0M2015.1 618.3L1990.1 626.7M798.4 594.1L808.9 603.4M2260.0 652.1L2243.0 663.7M620.1 611.0L620.9 622.3M402.5 631.6L388.7 645.6" stroke="rgb(24,24,27)" stroke-width="1.1" fill="none"/><path d="M1774.4 606.4L1843.1 617.1M1843.1 617.1L1920.5 629.2M1155.5 583.2L1105.1 588.7M1105.1 588.7L1051.2 594.7M1473.1 586.0L1518.1 594.4M1413.0 581.0L1372.2 586.4M1372.2 586.4L1328.6 592.2M1293.4 584.0L1328.6 592.2M1598.0 589.8L1561.6 595.8M1118.1 582.0L1144.0 590.0M1990.1 626.7L1962.9 635.8M388.7 645.6L372.8 661.6" stroke="rgb(25,25,28)" stroke-width="1.1" fill="none"/><path d="M1920.5 629.2L2008.2 642.8M2008.2 642.8L2108.4 658.5M2108.4 658.5L2224.1 676.5M2224.1 676.5L2359.1 697.6M1051.2 594.7L993.1 601.1M993.1 601.1L930.6 608.0M930.6 608.0L862.9 615.5M420.9 664.3L304.0 677.2M304.0 677.2L173.8 691.6M1518.1 594.4L1568.1 603.8M1568.1 603.8L1623.9 614.2M1328.6 592.2L1281.7 598.4M1328.6 592.2L1367.6 601.3M1561.6 595.8L1522.5 602.3M1144.0 590.0L1172.6 598.8M1962.9 635.8L1933.2 645.8M808.9 603.4L820.6 613.8M2243.0 663.7L2224.1 676.5M620.9 622.3L621.8 635.0M372.8 661.6L354.5 680.2" stroke="rgb(26,26,29)" stroke-width="1.1" fill="none"/><path d="M862.9 615.5L789.5 623.6M789.5 623.6L709.6 632.4M709.6 632.4L622.3 642.0M622.3 642.0L526.5 652.6M526.5 652.6L420.9 664.3M1623.9 614.2L1686.5 625.9M1686.5 625.9L1757.3 639.1M1757.3 639.1L1838.1 654.2M1838.1 654.2L1931.1 671.6M1931.1 671.6L2039.3 691.8M2039.3 691.8L2166.7 715.6M2166.7 715.6L2319.1 744.1M1281.7 598.4L1231.2 605.1M1231.2 605.1L1176.7 612.3M1176.7 612.3L1117.6 620.2M1117.6 620.2L1053.4 628.7M1053.4 628.7L983.3 638.0M983.3 638.0L906.6 648.2M906.6 648.2L822.2 659.4M822.2 659.4L729.0 671.7M729.0 671.7L625.3 685.5M625.3 685.5L509.5 700.9M509.5 700.9L379.2 718.1M379.2 718.1L231.5 737.7M231.5 737.7L62.7 760.1M1367.6 601.3L1411.1 611.4M1411.1 611.4L1459.8 622.7M1459.8 622.7L1514.8 635.5M1514.8 635.5L1577.4 650.1M1577.4 650.1L1649.3 666.8M1649.3 666.8L1732.7 686.3M1732.7 686.3L1830.7 709.0M1830.7 709.0L1947.2 736.2M1947.2 736.2L2088.3 769.0M2088.3 769.0L2262.7 809.6M2262.7 809.6L2483.5 861.0M1522.5 602.3L1480.4 609.3M1480.4 609.3L1434.7 616.9M1434.7 616.9L1385.2 625.1M1385.2 625.1L1331.2 634.1M1331.2 634.1L1272.2 643.9M1272.2 643.9L1207.4 654.6M1207.4 654.6L1136.0 666.5M1136.0 666.5L1056.7 679.7M1056.7 679.7L968.4 694.3M968.4 694.3L869.3 710.8M869.3 710.8L757.4 729.4M757.4 729.4L629.9 750.6M629.9 750.6L483.4 774.9M483.4 774.9L313.3 803.2M313.3 803.2L113.3 836.4M1172.6 598.8L1204.5 608.6M1204.5 608.6L1240.1 619.7M1240.1 619.7L1280.3 632.1M1280.3 632.1L1325.9 646.1M1325.9 646.1L1378.2 662.3M1378.2 662.3L1438.7 680.9M1438.7 680.9L1509.4 702.8M1509.4 702.8L1593.3 728.7M1593.3 728.7L1694.4 759.9M1694.4 759.9L1818.6 798.2M1818.6 798.2L1974.8 846.4M1974.8 846.4L2177.2 908.9M2177.2 908.9L2450.0 993.1M1933.2 645.8L1900.5 656.7M1900.5 656.7L1864.4 668.8M1864.4 668.8L1824.4 682.2M1824.4 682.2L1779.7 697.2M1779.7 697.2L1729.5 714.0M1729.5 714.0L1672.7 733.0M1672.7 733.0L1607.9 754.7M1607.9 754.7L1533.3 779.7M1533.3 779.7L1446.5 808.8M1446.5 808.8L1344.3 843.0M1344.3 843.0L1222.1 884.0M1222.1 884.0L1073.4 933.8M1073.4 933.8L888.5 995.7M888.5 995.7L652.6 1074.7M652.6 1074.7L340.8 1179.2M340.8 1179.2L-90.2 1323.5M820.6 613.8L833.7 625.4M833.7 625.4L848.5 638.6M848.5 638.6L865.5 653.6M865.5 653.6L884.9 670.9M884.9 670.9L907.6 691.0M907.6 691.0L934.2 714.7M934.2 714.7L966.1 742.9M966.1 742.9L1004.8 777.3M1004.8 777.3L1052.8 820.0M1052.8 820.0L1114.1 874.4M1114.1 874.4L1194.9 946.1M1194.9 946.1L1306.4 1045.0M1306.4 1045.0L1470.0 1190.3M1470.0 1190.3L1733.6 1424.2M1733.6 1424.2L2228.8 1863.9M2224.1 676.5L2203.1 690.8M2203.1 690.8L2179.6 706.9M2179.6 706.9L2153.1 724.9M2153.1 724.9L2122.9 745.5M2122.9 745.5L2088.3 769.0M2088.3 769.0L2048.3 796.3M2048.3 796.3L2001.4 828.3M2001.4 828.3L1945.6 866.3M1945.6 866.3L1878.3 912.1M1878.3 912.1L1795.4 968.6M1795.4 968.6L1690.8 1039.9M1690.8 1039.9L1554.7 1132.6M1554.7 1132.6L1370.3 1258.2M1370.3 1258.2L1106.4 1438.0M1106.4 1438.0L697.5 1716.6M621.8 635.0L622.8 649.5M622.8 649.5L624.0 666.2M624.0 666.2L625.3 685.5M625.3 685.5L626.9 708.1M626.9 708.1L628.8 735.1M628.8 735.1L631.1 767.7M631.1 767.7L633.9 807.9M633.9 807.9L637.5 858.9M637.5 858.9L642.1 925.4M642.1 925.4L648.4 1016.0M648.4 1016.0L657.6 1146.5M657.6 1146.5L671.9 1350.9M671.9 1350.9L697.5 1716.6M354.5 680.2L333.1 701.9M333.1 701.9L307.7 727.6M307.7 727.6L277.2 758.6M277.2 758.6L239.6 796.6M239.6 796.6L192.5 844.4" stroke="rgb(27,27,30)" stroke-width="1.1" fill="none"/><defs><linearGradient id="gAxR" gradientUnits="userSpaceOnUse" x1="607" y1="424" x2="800" y2="512"><stop offset="0" stop-color="#a42e46" stop-opacity="0.45"/><stop offset="1" stop-color="#a42e46" stop-opacity="1"/></linearGradient><linearGradient id="gAxB" gradientUnits="userSpaceOnUse" x1="254" y1="944" x2="2257" y2="499"><stop offset="0" stop-color="#2a4a92"/><stop offset="0.6" stop-color="#3a62b6"/><stop offset="1" stop-color="#4874c8"/></linearGradient></defs><path d="M607 424L2257.5 1180.6" stroke="url(#gAxR)" stroke-width="1.1" fill="none"/><path d="M254.5 944.1L2257.5 498.9" stroke="url(#gAxB)" stroke-width="1.1" fill="none"/><path d="M1256 103V1340" stroke="#48621c" stroke-opacity=".9" stroke-width="1.300"/><defs><linearGradient id="gHead" gradientUnits="userSpaceOnUse" x1="1340" y1="206" x2="1360" y2="296"><stop offset="0" stop-color="#aeaeae"/><stop offset="0.5" stop-color="#9c9c9c"/><stop offset="1" stop-color="#8a8a8a"/></linearGradient><linearGradient id="gTorso" gradientUnits="userSpaceOnUse" x1="1350" y1="300" x2="1350" y2="440"><stop offset="0" stop-color="#989898"/><stop offset="1" stop-color="#727272"/></linearGradient><linearGradient id="gSkirt" gradientUnits="userSpaceOnUse" x1="1380" y1="450" x2="1380" y2="720"><stop offset="0" stop-color="#7a7a7a"/><stop offset="0.33" stop-color="#686868"/><stop offset="0.6" stop-color="#545454"/><stop offset="1" stop-color="#404040"/></linearGradient><linearGradient id="gArm" gradientUnits="userSpaceOnUse" x1="1410" y1="320" x2="1410" y2="430"><stop offset="0" stop-color="#a6a6a6"/><stop offset="1" stop-color="#8e8e8e"/></linearGradient><linearGradient id="gBar" gradientUnits="userSpaceOnUse" x1="1280" y1="450" x2="1280" y2="464"><stop offset="0" stop-color="#8e8e8e"/><stop offset="1" stop-color="#505050"/></linearGradient><linearGradient id="gCanopy" gradientUnits="userSpaceOnUse" x1="1250" y1="480" x2="1290" y2="570"><stop offset="0" stop-color="#666666"/><stop offset="1" stop-color="#4e4e4e"/></linearGradient><linearGradient id="gDark" gradientUnits="userSpaceOnUse" x1="1170" y1="490" x2="1220" y2="550"><stop offset="0" stop-color="#2e2e2e"/><stop offset="1" stop-color="#505050"/></linearGradient><linearGradient id="gSeat" gradientUnits="userSpaceOnUse" x1="1200" y1="560" x2="1230" y2="640"><stop offset="0" stop-color="#343434"/><stop offset="1" stop-color="#484848"/></linearGradient><linearGradient id="gBasket" gradientUnits="userSpaceOnUse" x1="1150" y1="660" x2="1280" y2="700"><stop offset="0" stop-color="#363636"/><stop offset="1" stop-color="#484848"/></linearGradient></defs><g><polygon points="1288.8,538.0 1332.5,468.0 1340.0,450.5 1410.0,450.5 1410.6,475.5 1408.1,538.0 1406.9,569.2 1410.0,588.0 1417.5,613.0 1426.2,638.0 1434.4,656.8 1432.5,669.2 1423.8,684.2 1403.8,699.2 1385.0,706.1 1360.0,713.0 1332.5,718.0 1316.2,721.8 1297.5,719.2 1288.8,700.5" fill="url(#gSkirt)"  /><polygon points="1292.5,569.2 1308.8,563.0 1305.0,669.2 1292.5,670.5" fill="#000"  opacity="0.22"/><polygon points="1297.5,525.5 1315.0,500.5 1311.2,570.5 1306.2,670.5 1292.5,569.2" fill="#fff"  opacity="0.07"/><polygon points="1311.2,563.0 1337.5,513.0 1332.5,569.2 1322.5,678.0 1305.0,673.0" fill="#000"  opacity="0.25"/><polygon points="1371.2,556.8 1376.2,556.8 1372.5,585.5 1370.6,585.5" fill="#000"  opacity="0.3"/><polygon points="1367.5,608.0 1372.5,608.0 1371.2,675.5 1366.2,675.5" fill="#000"  opacity="0.3"/><polygon points="1387.5,593.0 1391.2,598.0 1393.8,669.2 1390.0,663.0" fill="#000"  opacity="0.3"/><polygon points="1406.2,636.8 1411.2,650.5 1421.2,650.5 1410.0,658.0" fill="#000"  opacity="0.3"/><polygon points="1348.8,650.5 1351.2,650.5 1350.6,678.0 1348.1,678.0" fill="#000"  opacity="0.3"/><polygon points="1288.8,678.0 1310.0,676.8 1322.5,681.8 1372.5,678.0 1393.8,674.2 1410.0,658.0 1434.4,656.8 1432.5,669.2 1423.8,684.2 1403.8,699.2 1385.0,706.1 1360.0,713.0 1332.5,718.0 1316.2,721.8 1297.5,719.2 1288.8,700.5" fill="#fff"  opacity="0.04"/><polygon points="1301.2,688.0 1310.0,678.0 1345.0,681.8 1342.5,688.0" fill="#000"  opacity="0.15"/><polygon points="1340.0,451.5 1410.0,445.2 1410.6,476.5 1408.8,538.0 1408.1,551.5 1355.0,551.5 1322.5,538.0 1335.0,501.5" fill="url(#gSkirt)"  /><polygon points="1340.0,451.5 1377.5,450.2 1365.0,467.8 1335.0,489.0 1335.0,464.0" fill="#585858" stroke="#585858" stroke-width="0.7" /><polygon points="1335.0,489.0 1365.0,467.8 1355.0,526.5 1321.2,551.5 1321.2,538.0" fill="#606060" stroke="#606060" stroke-width="0.7" /><polygon points="1345.0,304.4 1335.0,308.1 1315.0,320.0 1309.4,328.8 1303.8,346.2 1298.8,364.0 1291.0,395.2 1301.2,405.2 1318.1,405.9 1326.2,431.5 1372.5,431.5 1383.8,424.0 1425.0,429.0 1431.2,425.2 1434.4,405.2 1438.1,364.0 1440.0,327.5 1439.4,315.0 1433.8,305.0 1410.0,293.8 1395.6,288.1 1380.0,291.9 1365.0,297.5" fill="url(#gTorso)"  /><polygon points="1298.8,364.0 1303.8,346.5 1309.4,329.0 1311.2,364.0 1318.1,405.9 1301.2,405.2 1291.0,395.2" fill="#6c6c6c" stroke="#6c6c6c" stroke-width="0.7" /><polygon points="1391.2,313.8 1376.2,331.2 1366.2,351.2 1365.0,364.0 1365.0,401.5 1372.5,431.5 1383.8,424.0 1386.2,419.0 1388.8,401.5 1391.2,382.8 1393.8,364.0 1393.8,352.5 1410.6,337.5 1402.5,325.6" fill="#666666" stroke="#666666" stroke-width="0.7" /><polygon points="1376.2,365.0 1391.2,358.8 1388.8,401.5 1383.8,424.0 1372.5,431.5 1367.5,402.5" fill="#585858" stroke="#585858" stroke-width="0.7" /><polygon points="1410.6,337.5 1393.8,352.5 1393.8,364.0 1391.2,382.8 1388.8,401.5 1386.2,419.0 1397.5,424.0 1425.0,429.0 1431.2,425.2 1434.4,405.2 1435.0,364.0 1440.0,327.5 1439.4,315.0 1433.8,305.0 1410.0,293.8 1391.2,313.8 1402.5,325.6" fill="url(#gArm)"  /><polygon points="1416.2,346.2 1439.4,315.0 1440.0,327.5 1435.0,364.0 1434.4,405.2 1431.2,425.2 1417.5,420.0" fill="#8a8a8a" stroke="#8a8a8a" stroke-width="0.7" /><polygon points="1376.2,302.5 1395.6,288.1 1410.0,293.8 1433.8,305.0 1439.4,315.0 1416.2,346.2 1410.6,337.5 1402.5,325.6 1391.2,313.8" fill="#a4a4a4" stroke="#a4a4a4" stroke-width="0.7" /><polygon points="1390.6,263.8 1392.5,276.2 1395.6,288.1 1380.0,291.9 1365.0,297.5 1345.0,304.4 1340.0,298.8 1339.4,291.2 1350.0,286.2 1372.5,275.0" fill="#848484" stroke="#848484" stroke-width="0.7" /><polygon points="1339.4,291.2 1350.0,286.2 1362.5,280.0 1355.0,293.8 1345.0,304.4 1340.0,298.8" fill="#707070" stroke="#707070" stroke-width="0.7" /><polygon points="1311.2,235.0 1317.5,225.0 1326.2,216.9 1338.8,211.2 1350.0,208.8 1361.2,206.9 1372.5,206.9 1383.8,210.0 1391.2,214.4 1395.0,220.0 1396.2,231.2 1395.6,246.2 1393.8,255.0 1390.6,263.8 1372.5,275.0 1350.0,286.2 1339.4,291.2 1331.2,295.0 1325.0,288.8 1318.8,276.2 1313.8,263.8 1310.6,250.0" fill="url(#gHead)"  /><polygon points="1317.8,225.6 1326.2,216.9 1338.8,211.2 1335.0,221.9 1330.6,230.6" fill="#b2b2b2" stroke="#b2b2b2" stroke-width="0.7" /><polygon points="1311.2,235.0 1317.8,225.6 1330.6,230.6 1328.8,250.0 1335.0,277.5 1331.2,295.0 1325.0,288.8 1318.8,276.2 1313.8,263.8 1310.6,250.0" fill="#969696"  opacity=".55"/><polygon points="1172,716 1270,700 1270,736 1172,756" fill="#000"/><polygon points="1236.2,461.5 1243.1,465.2 1230.0,478.4 1224.0,476.5" fill="#6e6e6e" stroke="#6e6e6e" stroke-width="0.7" /><polygon points="1230.0,477.5 1314.2,489.0 1285.5,549.0 1273.8,566.2 1262.5,570.0 1255.0,565.0" fill="url(#gCanopy)"  /><polygon points="1161.2,486.9 1218.8,492.5 1225.6,498.8 1235.0,520.0 1191.2,550.0" fill="url(#gDark)"  /><polygon points="1191.2,550.0 1235.0,520.0 1255.0,565.0 1262.5,570.0 1273.8,566.2 1248.8,602.5 1232.5,635.0 1170.0,627.5 1145.0,614.0 1167.5,587.5" fill="url(#gSeat)"  /><polygon points="1205.0,575.0 1252.5,586.2 1232.5,635.0 1182.5,613.8" fill="#484848" stroke="#484848" stroke-width="0.7" /><polygon points="1156.2,471.9 1230.0,477.5 1226.2,493.8 1218.8,492.5 1161.2,486.9" fill="#909090" stroke="#909090" stroke-width="0.7" /><polygon points="1156.2,471.9 1195.0,475.0 1193.8,477.5 1157.5,476.2" fill="#9c9c9c" stroke="#9c9c9c" stroke-width="0.7" /><polygon points="1156.2,471.9 1161.2,486.9 1191.2,550.0 1185.0,554.4" fill="#7c7c7c" stroke="#7c7c7c" stroke-width="0.7" /><polygon points="1218.8,492.5 1226.2,493.8 1230.0,477.5 1235.0,482.5 1265.0,560.0 1262.5,570.0 1255.0,565.0 1225.6,498.8" fill="#7e7e7e" stroke="#7e7e7e" stroke-width="0.7" /><polygon points="1178.8,543.8 1182.5,547.5 1152.5,588.8 1148.8,588.8" fill="#555555" stroke="#555555" stroke-width="0.7" /><polygon points="1186.2,555.0 1191.2,557.5 1170.0,590.0 1165.0,587.5" fill="#505050" stroke="#505050" stroke-width="0.7" /><polygon points="1110.0,598.0 1135.0,591.8 1160.0,600.5 1173.8,605.5 1205.0,614.9 1208.1,624.2 1176.2,630.5 1152.5,618.0" fill="#b2b2b2" stroke="#b2b2b2" stroke-width="0.7" /><polygon points="1110.0,598.0 1152.5,618.0 1176.2,630.5 1175.0,633.0 1150.0,621.8 1107.5,600.5" fill="#8c8c8c" stroke="#8c8c8c" stroke-width="0.7" /><polygon points="1120.0,614.0 1160.0,614.0 1187.5,634.0 1181.2,643.4 1115.0,620.9" fill="#3c3c3c" stroke="#3c3c3c" stroke-width="0.7" /><polygon points="1115.0,620.9 1181.2,643.4 1179.4,651.5 1170.0,664.0 1113.1,645.2 1106.9,636.5" fill="#606060" stroke="#606060" stroke-width="0.7" /><polygon points="1181.2,643.4 1197.5,630.2 1212.5,634.0 1215.0,642.8 1197.5,669.0 1181.2,670.2 1173.8,661.5" fill="#626262" stroke="#626262" stroke-width="0.7" /><polygon points="1212.5,617.8 1240.0,614.0 1268.8,614.0 1248.8,654.0 1215.0,664.0 1200.0,669.0 1215.0,642.8" fill="#505050" stroke="#505050" stroke-width="0.7" /><polygon points="1132.5,664.0 1170.0,664.0 1181.2,670.2 1200.0,669.0 1215.0,664.0 1248.8,654.0 1270.0,657.8 1280.0,661.5 1280.6,694.0 1257.5,706.5 1213.8,714.0 1201.2,711.5 1145.0,684.0" fill="url(#gBasket)"  /><polygon points="1207.5,672.8 1270.0,657.8 1280.0,661.5 1280.6,694.0 1257.5,706.5 1213.8,714.0 1205.0,689.0" fill="#4a4a4a" stroke="#4a4a4a" stroke-width="0.7" /><polygon points="1248.8,654.0 1257.5,655.2 1270.0,657.8 1207.5,672.8 1200.0,669.0 1215.0,664.0" fill="#3a3a3a" stroke="#3a3a3a" stroke-width="0.7" /><polygon points="1263.8,720.2 1266.9,709.0 1277.5,700.2 1291.2,696.5 1305.0,700.2 1313.8,711.5 1316.2,726.5 1312.5,740.2 1303.8,749.0 1291.2,751.5 1280.0,746.5 1270.0,737.8 1265.0,729.0" fill="#464646" stroke="#464646" stroke-width="0.7" /><polygon points="1251.2,709.0 1268.8,704.0 1265.0,712.8 1257.5,714.0" fill="#585858" stroke="#585858" stroke-width="0.7" /><polygon points="1088.1,682.1 1165.0,724.0 1161.2,728.4 1085.0,687.1" fill="#525252" stroke="#525252" stroke-width="0.7" /><polygon points="1111.9,645.2 1116.9,647.1 1090.0,687.8 1085.6,685.2" fill="#5c5c5c" stroke="#5c5c5c" stroke-width="0.7" /><polygon points="1296.9,538.0 1308.8,538.0 1290.6,549.2 1289.4,593.0 1280.6,594.2 1247.5,656.8 1218.8,664.2 1215.0,655.5" fill="#545454" stroke="#545454" stroke-width="0.7" /><polygon points="1290.0,548.0 1289.4,593.0 1280.0,594.2 1279.4,697.4 1288.8,699.2" fill="#050505" stroke="#050505" stroke-width="0.7" /><polygon points="1326.5,463 1335.5,464 1295.5,549 1285.5,549" fill="#5c5c5c"/><polygon points="1285.5,549 1295.5,549 1171,729 1162,729" fill="#525252"/><polygon points="1326.5,463 1329,463.3 1288,549 1285.5,549" fill="#747474"/><polygon points="1285.5,549 1288,549 1164.5,729 1162,729" fill="#6a6a6a"/><polygon points="1041.2,701.5 1045.0,690.2 1055.0,682.8 1070.0,680.9 1085.0,685.2 1096.2,694.0 1100.0,706.5 1097.5,720.2 1090.0,730.2 1077.5,735.9 1066.2,735.2 1055.0,729.0 1046.2,721.5 1041.9,711.5" fill="#5c5c5c" stroke="#5c5c5c" stroke-width="0.7" /><ellipse cx="1075.6" cy="709.6" rx="23.8" ry="26.0" fill="#484848" transform="rotate(-12 1075.6 709.6)"/><polyline points="1061.2,684.0 1051.2,694.0 1046.9,706.5 1048.1,717.8 1053.8,726.5" fill="none" stroke="#2a2a2a" stroke-width="1.2" /><polygon points="1111.2,749.0 1115.0,736.5 1123.8,726.5 1137.5,721.5 1155.0,724.0 1168.8,732.8 1177.5,746.5 1178.8,761.5 1173.8,775.2 1161.2,785.2 1145.0,787.8 1130.0,780.2 1118.8,770.2 1112.5,760.2" fill="#5a5a5a" stroke="#5a5a5a" stroke-width="0.7" /><ellipse cx="1149.4" cy="755.9" rx="29.0" ry="31.2" fill="#464646" transform="rotate(-12 1149.4 755.9)"/><polyline points="1136.2,725.2 1125.0,736.5 1118.8,750.2 1118.8,762.8 1123.8,774.0" fill="none" stroke="#2a2a2a" stroke-width="1.2" /><polygon points="1258.8,452.1 1303.1,450.2 1303.8,462.8 1266.2,463.4" fill="url(#gBar)"  /><polygon points="1293.1,401.5 1318.1,405.9 1323.8,422.8 1321.9,429.6 1300.0,437.8 1270.0,450.2 1262.5,437.8 1272.5,429.0" fill="#a2a2a2" stroke="#a2a2a2" stroke-width="0.7" /><polygon points="1293.1,401.5 1318.1,405.9 1321.2,416.5 1285.0,429.0 1268.8,439.0 1262.5,437.8 1272.5,429.0" fill="#aeaeae" stroke="#aeaeae" stroke-width="0.7" /><polygon points="1262.5,437.8 1270.0,450.2 1266.2,462.8 1262.5,470.2 1258.8,470.9 1255.0,462.8 1252.5,467.8 1247.5,469.0 1240.0,457.8 1235.0,454.0 1240.0,449.0 1251.2,441.5" fill="#a6a6a6" stroke="#a6a6a6" stroke-width="0.7" /><polygon points="1332.5,431.5 1383.8,427.8 1397.5,424.0 1425.0,429.0 1422.5,430.9 1340.0,440.2 1335.0,444.0" fill="#b0b0b0" stroke="#b0b0b0" stroke-width="0.7" /><polygon points="1340.0,440.2 1422.5,430.9 1425.0,429.0 1420.0,441.5 1410.0,445.2 1340.0,451.5" fill="#9c9c9c" stroke="#9c9c9c" stroke-width="0.7" /><polygon points="1303.8,447.8 1332.5,431.5 1340.0,440.2 1340.0,451.5 1332.5,459.0 1327.5,462.8 1321.2,472.8 1315.0,475.9 1307.5,474.0 1303.8,467.8 1305.0,462.8 1303.1,456.5" fill="#acacac" stroke="#acacac" stroke-width="0.7" /><polygon points="1315.0,451.5 1332.5,444.0 1340.0,451.5 1332.5,459.0 1327.5,462.8 1321.2,472.8 1315.0,475.9" fill="#989898" stroke="#989898" stroke-width="0.7" /><path d="M1256 440V481" stroke="#86b02a" stroke-opacity=".8" stroke-width="1.3"/><path d="M1256 715V746" stroke="#48621c" stroke-opacity=".9" stroke-width="1.3"/></g><circle cx="2215.25" cy="172.7" r="8" fill="#66a010"/><circle cx="2198.4" cy="136.8" r="7.8" fill="#96283f"/><text x="2198.4" y="140.8" font-size="11" font-family="Liberation Sans,sans-serif" text-anchor="middle" fill="#6a1a2a">X</text><line x1="2215.25" y1="144.6" x2="2203" y2="139" stroke="#d83c56" stroke-width="2.2"/><circle cx="2239.5" cy="138.8" r="7.8" fill="#2869be"/><text x="2239.5" y="142.8" font-size="11" font-family="Liberation Sans,sans-serif" text-anchor="middle" fill="#17407c">Z</text><line x1="2215.25" y1="144.6" x2="2234" y2="140.2" stroke="#3a88dc" stroke-width="2.2"/><line x1="2215.25" y1="144.6" x2="2215.25" y2="122" stroke="#8ad420" stroke-width="2.3"/><circle cx="2215.25" cy="116.5" r="8.1" fill="#7fc61a"/><text x="2215.25" y="120.7" font-size="11.5" font-family="Liberation Sans,sans-serif" text-anchor="middle" fill="#234204">Y</text><circle cx="2191.3" cy="150.1" r="7.6" fill="#2468c0" stroke="#3f86dc" stroke-width="0.9"/><circle cx="2232.1" cy="152" r="7.6" fill="#b82c44" stroke="#e84a62" stroke-width="0.9"/><path d="M255 103V1340H2257.500" stroke="#6c6c70" stroke-width="1" fill="none"/><defs><linearGradient id="gBr" gradientUnits="userSpaceOnUse" x1="0" y1="103" x2="0" y2="1340"><stop offset="0" stop-color="#45465a"/><stop offset="0.5" stop-color="#505060"/><stop offset="1" stop-color="#6e6e72"/></linearGradient></defs><path d="M254.5 103.5H2257" stroke="#3a4155" stroke-width="1" fill="none"/><path d="M2257 103.5V1340.5" stroke="url(#gBr)" stroke-width="1.2" fill="none"/></svg>
<div style="left:265.5px;top:113px;width:102.5px;height:26px;background:#202228;border-radius:3px;"></div>
<svg class="i" style="left:267.67px;top:117.66px;width:16.67px;height:16.67px;" viewBox="0 0 16 16"><g fill="#e0e0e0"><circle cx="8" cy="2" r="1.7"/><circle cx="8" cy="8" r="1.7"/><circle cx="8" cy="14" r="1.7"/></g></svg>
<span class="t" style="left:286.5px;top:116.00px;color:#dfe1e5;font-size:14.6px;letter-spacing:-0.06px;">Perspective</span>
<div style="left:254px;top:1351px;width:2003.5px;height:35px;background:#333b4f;"></div>
<div style="left:264px;top:1364px;width:9px;height:9px;border-radius:50%;background:#f0545a"></div>
<span class="t" style="left:275px;top:1358.50px;color:#d5d8dd;font-size:14.6px;letter-spacing:0.48px;">Output</span>
<span class="t" style="left:338px;top:1358.50px;color:#d5d8dd;font-size:14.6px;letter-spacing:0.16px;">Debugger</span>
<span class="t" style="left:420.5px;top:1358.50px;color:#d5d8dd;font-size:14.6px;">Audio</span>
<span class="t" style="left:474.5px;top:1358.50px;color:#d5d8dd;font-size:14.6px;letter-spacing:0.3px;">Animation</span>
<span class="t" style="left:2173.5px;top:1358.50px;color:#8d93a1;font-size:14.6px;">3.5.2.stable</span>
<div style="left:2267px;top:69px;width:286.5px;height:1317px;background:#333b4f;"></div>
<div style="left:2267px;top:41px;width:82px;height:28.5px;background:#333b4f;"></div>
<div style="left:2349px;top:41px;width:57px;height:28px;background:#262c3b;"></div>
<span class="t" style="left:2276.5px;top:44.00px;color:#dadde2;font-size:14.6px;letter-spacing:0.25px;">Inspector</span>
<span class="t" style="left:2359.5px;top:44.00px;color:#6a7083;font-size:14.6px;">Node</span>
<svg class="i" style="left:2538.16px;top:46.16px;width:16.67px;height:16.67px;" viewBox="0 0 16 16"><g fill="#9097a6"><circle cx="8" cy="2" r="1.7"/><circle cx="8" cy="8" r="1.7"/><circle cx="8" cy="14" r="1.7"/></g></svg>
<svg class="i" style="left:2278.16px;top:78.66px;width:16.67px;height:16.67px;" viewBox="0 0 16 16"><path d="M2 1v14h5.500v-2.500H10V10h2.500V6L8 1z" fill="#e0e0e0"/><path d="M8 1v4.500h4.500z" fill="#333b4f" opacity=".5"/><path d="M11 10h2v2h2v2h-2v2h-2v-2H9v-2h2z" fill="#5fff97" opacity=".9"/></svg>
<svg class="i" style="left:2309.66px;top:78.66px;width:16.67px;height:16.67px;" viewBox="0 0 16 16"><path d="M1 3.500a1 1 0 0 1 1-1h3.500l1.300 1.700H11a1 1 0 0 1 1 1V6H4.500L2.500 13H1z" fill="#e0e0e0" opacity=".85"/><path d="M4.800 7H15.500l-2.300 6.500a1 1 0 0 1-1 .7H2.200z" fill="#e0e0e0"/></svg>
<svg class="i" style="left:2341.66px;top:78.66px;width:16.67px;height:16.67px;opacity:0.45;" viewBox="0 0 16 16"><path d="M1.500 2.500a1 1 0 0 1 1-1H12L14.500 4v9.500a1 1 0 0 1-1 1h-11a1 1 0 0 1-1-1z" fill="#e0e0e0"/><rect x="4" y="1.500" width="7" height="4.500" fill="#333b4f"/><rect x="8.300" y="2.200" width="1.800" height="3" fill="#e0e0e0"/><circle cx="8" cy="10.300" r="2" fill="#333b4f"/></svg>
<svg class="i" style="left:2373.66px;top:78.66px;width:16.67px;height:16.67px;" viewBox="0 0 16 16"><g fill="#e0e0e0"><circle cx="8" cy="2" r="1.7"/><circle cx="8" cy="8" r="1.7"/><circle cx="8" cy="14" r="1.7"/></g></svg>
<svg class="i" style="left:2475.66px;top:78.66px;width:16.67px;height:16.67px;" viewBox="0 0 16 16"><path d="M10.500 2L5 8l5.500 6" fill="none" stroke="#e0e0e0" stroke-width="2" stroke-linecap="round" stroke-linejoin="round"/></svg>
<svg class="i" style="left:2499.16px;top:78.66px;width:16.67px;height:16.67px;opacity:0.45;" viewBox="0 0 16 16"><path d="M5.500 2L11 8l-5.500 6" fill="none" stroke="#e0e0e0" stroke-width="2" stroke-linecap="round" stroke-linejoin="round"/></svg>
<svg class="i" style="left:2527.66px;top:78.66px;width:16.67px;height:16.67px;" viewBox="0 0 16 16"><path d="M3.600 11.800A6 6 0 1 0 3.300 5" fill="none" stroke="#e0e0e0" stroke-width="2"/><path d="M.300 5.300h5.400l-2.700 3.600z" fill="#e0e0e0"/><path d="M9 4.500V8.500h3.200" fill="none" stroke="#e0e0e0" stroke-width="1.800"/></svg>
<div style="left:2272.5px;top:104.5px;width:244.5px;height:26px;background:#2e3547;border-radius:2px;"></div>
<svg class="i" style="left:2527.16px;top:109.66px;width:16.67px;height:16.67px;opacity:0.5;" viewBox="0 0 16 16"><circle cx="9.500" cy="4" r="2.800" fill="none" stroke="#e0e0e0" stroke-width="1.700"/><path d="M7.500 6l-2.800 2.800" stroke="#e0e0e0" stroke-width="2" stroke-linecap="round"/><text x="8" y="15.500" font-family="Liberation Sans,sans-serif" font-weight="bold" font-size="6.500" text-anchor="middle" fill="#e0e0e0">DOC</text></svg>
<div style="left:2272.5px;top:135px;width:244.5px;height:26px;background:#2e3547;border-radius:2px;"></div>
<span class="t" style="left:2278.3px;top:138.50px;color:#858b99;font-size:14.6px;letter-spacing:0.23px;">Filter properties</span>
<svg class="i" style="left:2495.16px;top:140.16px;width:16.67px;height:16.67px;opacity:0.75;" viewBox="0 0 16 16"><circle cx="6.300" cy="6.300" r="4" fill="none" stroke="#e0e0e0" stroke-width="2.200"/><path d="M9.500 9.500l4.800 4.800" stroke="#e0e0e0" stroke-width="2.600" stroke-linecap="round"/></svg>
<svg class="i" style="left:2527.16px;top:140.16px;width:16.67px;height:16.67px;" viewBox="0 0 16 16"><path d="M3.200 1v6M3.200 1h1.600v6.500H3.200z" fill="#e0e0e0"/><path d="M2.500 7.500h3v5.500a1.500 1.500 0 0 1-3 0z" fill="#e0e0e0"/><path d="M4 1v7" stroke="#e0e0e0" stroke-width="1.600"/><path d="M9.200 1v3.500a2.600 2.600 0 0 0 1.800 2.400V15h1.800V6.900a2.600 2.600 0 0 0 1.800-2.400V1H13v3.500h-2.200V1z" fill="#e0e0e0"/></svg>
<div style="left:2272px;top:165px;width:277px;height:1216.5px;background:#262c3b;"></div>
</div></body></html>
